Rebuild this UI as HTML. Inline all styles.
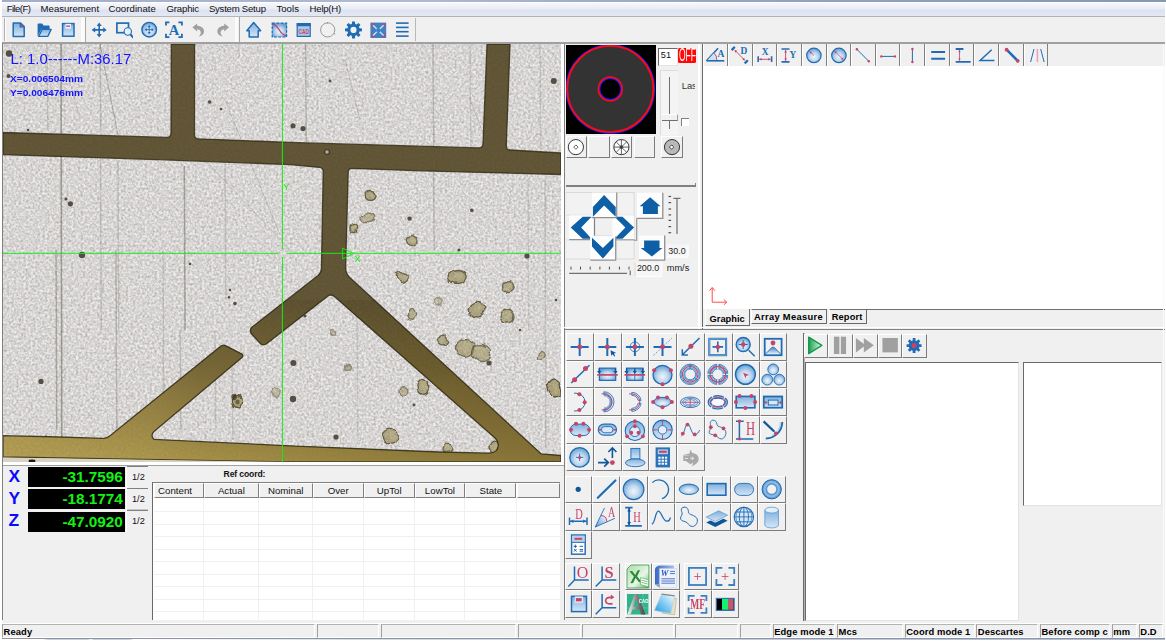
<!DOCTYPE html><html><head><meta charset="utf-8"><title>Measurement</title><style>
*{box-sizing:border-box;margin:0;padding:0}
html,body{width:1166px;height:641px;overflow:hidden;background:#f0f0f0;font-family:"Liberation Sans",sans-serif;}
body{position:relative}
.a{position:absolute}
.t{position:absolute;white-space:nowrap;line-height:1}
.menu{position:absolute;left:2px;top:3px;width:1164px;height:13px;background:linear-gradient(#f6f7fc,#e9ecf6 45%,#dde2f0 55%,#e4e8f4);}
.menu .t{font-size:9.6px;color:#111;top:1.1px}
.btn{position:absolute;background:#f0f0f0;border-right:1px solid #7c7c7c;border-bottom:1px solid #7c7c7c;border-left:1px solid #fff;border-top:1px solid #fff}
.btn svg{position:absolute;left:0;top:0}
.sb{position:absolute;top:624px;height:14px;border-top:1px solid #b4b4b4;border-left:1px solid #a0a0a0;border-right:1px solid #fff;border-bottom:1px solid #fff}
.sbt{position:absolute;top:627.3px;font-size:9.4px;font-weight:bold;color:#000;white-space:nowrap;line-height:1;letter-spacing:0.1px}
.sunk{position:absolute;background:#fff;border-top:1.5px solid #696969;border-left:1.5px solid #696969;border-right:1px solid #e3e3e3;border-bottom:1px solid #e3e3e3}
.th{position:absolute;top:483px;height:15px;background:#f0f0f0;border-right:1.5px solid #808080;border-bottom:1.5px solid #808080;border-top:1px solid #fff;border-left:1px solid #fff;font-size:9.7px;color:#111;text-align:center;line-height:14px}
</style></head><body>
<div class="a" style="left:1.5px;top:0;width:1165px;height:1.6px;background:linear-gradient(90deg,#a2aec8,#b0bad2 35%,#98a6be 60%,#8698b0)"></div>
<div class="a" style="left:0;top:1.6px;width:1166px;height:1.6px;background:#fff"></div>
<div class="a" style="left:0;top:0;width:1.5px;height:641px;background:#fff"></div>
<div class="menu">
<span class="t" style="left:4.7px;letter-spacing:-0.57px">File(F)</span>
<span class="t" style="left:38.6px;letter-spacing:-0.02px">Measurement</span>
<span class="t" style="left:106.5px;letter-spacing:0.05px">Coordinate</span>
<span class="t" style="left:164.4px;letter-spacing:-0.14px">Graphic</span>
<span class="t" style="left:206.9px;letter-spacing:-0.24px">System Setup</span>
<span class="t" style="left:274.4px;letter-spacing:0.04px">Tools</span>
<span class="t" style="left:307.6px;letter-spacing:-0.24px">Help(H)</span>
</div>
<div class="a" style="left:2px;top:15.6px;width:1164px;height:1.2px;background:#b4b4b4"></div>
<div class="a" style="left:2px;top:17px;width:1164px;height:25.5px;background:#f0f0f0"></div>
<div class="a" style="left:4px;top:18px;width:1px;height:23px;background:#b0b0b0"></div>
<div class="a" style="left:5px;top:18px;width:1px;height:23px;background:#fff"></div>
<div class="a" style="left:81px;top:17px;width:3.6px;height:24.5px;background:#fbfbfb"></div>
<div class="a" style="left:84.6px;top:17px;width:1px;height:24.5px;background:#a8a8a8"></div>
<div class="a" style="left:235.4px;top:17px;width:3px;height:24.5px;background:#fbfbfb"></div>
<div class="a" style="left:238.6px;top:17px;width:1px;height:24.5px;background:#a8a8a8"></div>
<div class="a" style="left:415px;top:18px;width:1px;height:23px;background:#b8b8b8"></div>
<svg class="a" style="left:11px;top:20.5px" width="18" height="18" viewBox="0 0 18 18"><path d="M2.2 2 H9.6 L13.2 5.6 V15.6 H2.2 Z" fill="url(#g1)" stroke="#1f6cb4" stroke-width="1.5" stroke-linejoin="round"/><path d="M9.3 2.2 V5.8 H13" fill="none" stroke="#1f6cb4" stroke-width="1.3"/><path d="M9.9 2.6 L12.6 5.3 H9.9Z" fill="#c4446a"/></svg>
<svg class="a" style="left:35.5px;top:20.5px" width="18" height="18" viewBox="0 0 18 18"><path d="M1.6 15.2 V3.2 Q1.6 2.4 2.4 2.4 H6.2 L7.6 4.4 H12.8 Q13.6 4.4 13.6 5.2 V8 H5.5 Z" fill="#1f6cb4"/><path d="M6.2 8.4 H15.2 L11.8 15.4 H2.6 Z" fill="url(#g1)" stroke="#1f6cb4" stroke-width="1.3" stroke-linejoin="round"/></svg>
<svg class="a" style="left:61px;top:20.5px" width="18" height="18" viewBox="0 0 18 18"><rect x="1.6" y="2.6" width="11.4" height="12.6" fill="url(#g1)" stroke="#1f6cb4" stroke-width="1.5"/><rect x="4.4" y="2.8" width="5.6" height="4.8" fill="#eef4fb"/><rect x="5.2" y="4.5" width="4" height="1.3" fill="#c4446a"/></svg>
<svg class="a" style="left:91px;top:20.5px" width="18" height="18" viewBox="0 0 18 18"><path d="M2.5999999999999996 8.9H13.799999999999999M8.2 3.3000000000000007V14.5" stroke="#1f6cb4" stroke-width="1.6" fill="none"/><path d="M15.72 8.90L12.20 11.46L12.20 6.34Z" fill="#1f6cb4"/><path d="M0.68 8.90L4.20 6.34L4.20 11.46Z" fill="#1f6cb4"/><path d="M8.20 16.42L5.64 12.90L10.76 12.90Z" fill="#1f6cb4"/><path d="M8.20 1.38L10.76 4.90L5.64 4.90Z" fill="#1f6cb4"/></svg>
<svg class="a" style="left:115px;top:20.5px" width="18" height="18" viewBox="0 0 18 18"><rect x="1.9" y="2.1" width="11.6" height="9.6" fill="none" stroke="#1f6cb4" stroke-width="1.7"/><path d="M15 12.8 L18 16.4" stroke="#1f6cb4" stroke-width="2" stroke-linecap="round"/><circle cx="12.8" cy="10.5" r="3.7" fill="#e8f1fa" stroke="#1f6cb4" stroke-width="1.1"/></svg>
<svg class="a" style="left:140.5px;top:20.5px" width="18" height="18" viewBox="0 0 18 18"><circle cx="8.2" cy="8.7" r="7.3" fill="url(#g2)" stroke="#1f6cb4" stroke-width="1.4"/><path d="M4.799999999999999 8.7H11.6M8.2 5.299999999999999V12.1" stroke="#1f6cb4" stroke-width="0.9" fill="none"/><path d="M12.80 8.70L10.60 10.30L10.60 7.10Z" fill="#1f6cb4"/><path d="M3.60 8.70L5.80 7.10L5.80 10.30Z" fill="#1f6cb4"/><path d="M8.20 13.30L6.60 11.10L9.80 11.10Z" fill="#1f6cb4"/><path d="M8.20 4.10L9.80 6.30L6.60 6.30Z" fill="#1f6cb4"/></svg>
<svg class="a" style="left:164.5px;top:20.5px" width="18" height="18" viewBox="0 0 18 18"><path d="M1 4.6V1.4H4.4M13.4 1.4H16.9V4.6M16.9 12.8V16.2H13.4M4.4 16.2H1V12.8" fill="none" stroke="#1f6cb4" stroke-width="1.8"/><text x="9" y="13.6" text-anchor="middle" font-family="Liberation Serif, serif" font-weight="bold" font-size="14.5" fill="#1f6cb4">A</text></svg>
<svg class="a" style="left:190px;top:20.5px" width="18" height="18" viewBox="0 0 18 18"><path d="M2.4 6.2 L7.2 2.6 V4.8 C11.5 5 14.4 7.5 14 11 C13.7 13.4 11.5 15 8.6 15.6 C10.6 13.8 11.2 12 10.6 10.4 C10 9 8.8 8.3 7.2 8.2 V10.4 Z" fill="#a0a0a0"/></svg>
<svg class="a" style="left:215px;top:20.5px" width="18" height="18" viewBox="0 0 18 18"><g transform="translate(16.4 0) scale(-1 1)"><path d="M2.4 6.2 L7.2 2.6 V4.8 C11.5 5 14.4 7.5 14 11 C13.7 13.4 11.5 15 8.6 15.6 C10.6 13.8 11.2 12 10.6 10.4 C10 9 8.8 8.3 7.2 8.2 V10.4 Z" fill="#a0a0a0"/></g></svg>
<svg class="a" style="left:245px;top:20.5px" width="18" height="18" viewBox="0 0 18 18"><path d="M8.7 1.6 L15.6 9.8 H13.2 V16 H4.2 V9.8 H1.8 Z" fill="url(#g1)" stroke="#1f6cb4" stroke-width="1.5" stroke-linejoin="round"/></svg>
<svg class="a" style="left:270.5px;top:20.5px" width="18" height="18" viewBox="0 0 18 18"><rect x="1.2" y="2.2" width="14.4" height="13.8" fill="url(#g2)" stroke="#1f6cb4" stroke-width="1.2" stroke-dasharray="3 1.2"/><path d="M2 3.4 C8 4 8.5 14 15 14.6" fill="none" stroke="#c4446a" stroke-width="1.2"/></svg>
<svg class="a" style="left:296px;top:20.5px" width="18" height="18" viewBox="0 0 18 18"><rect x="1.2" y="2.6" width="13" height="12.8" fill="#a9c9e8" stroke="#1f6cb4" stroke-width="1.2"/><rect x="0.8" y="2.2" width="13.8" height="3" fill="#1f6cb4"/><text x="7.7" y="13" text-anchor="middle" font-family="Liberation Sans, sans-serif" font-weight="bold" font-size="6.4" fill="#c4446a" textLength="10.4" lengthAdjust="spacingAndGlyphs">CAD</text></svg>
<svg class="a" style="left:320px;top:20.5px" width="18" height="18" viewBox="0 0 18 18"><circle cx="7.7" cy="8.9" r="7.1" fill="none" stroke="#9a9a9a" stroke-width="1"/><path d="M7.4 1.2v1.6M14 12.4l1.2 .9" stroke="#9a9a9a" stroke-width="1"/></svg>
<svg class="a" style="left:344.5px;top:20.5px" width="18" height="18" viewBox="0 0 18 18"><path d="M16.98 7.49 L16.98 10.31 L14.47 10.58 L13.91 11.93 L15.50 13.90 L13.50 15.90 L11.53 14.31 L10.18 14.87 L9.91 17.38 L7.09 17.38 L6.82 14.87 L5.47 14.31 L3.50 15.90 L1.50 13.90 L3.09 11.93 L2.53 10.58 L0.02 10.31 L0.02 7.49 L2.53 7.22 L3.09 5.87 L1.50 3.90 L3.50 1.90 L5.47 3.49 L6.82 2.93 L7.09 0.42 L9.91 0.42 L10.18 2.93 L11.53 3.49 L13.50 1.90 L15.50 3.90 L13.91 5.87 L14.47 7.22Z" fill="#1f6cb4"/><circle cx="8.5" cy="8.9" r="3.1" fill="#f0f0f0"/></svg>
<svg class="a" style="left:369.5px;top:20.5px" width="18" height="18" viewBox="0 0 18 18"><rect x="0.4" y="1.6" width="15.8" height="15.4" fill="#3f82c4"/><path d="M2 6V3.2H5M11.6 3.2H14.6V6M14.6 12.6V15.4H11.6M5 15.4H2V12.6" fill="none" stroke="#c4446a" stroke-width="1.3"/><path d="M3 4.2L13.6 14.4M13.6 4.2L3 14.4" stroke="#cfe2f4" stroke-width="1.4"/><circle cx="8.3" cy="9.3" r="2.2" fill="#3f82c4"/></svg>
<svg class="a" style="left:395px;top:20.5px" width="18" height="18" viewBox="0 0 18 18"><rect x="1" y="1.30" width="12.6" height="1.6" fill="#1f6cb4"/><rect x="1" y="5.60" width="12.6" height="1.6" fill="#1f6cb4"/><rect x="1" y="9.90" width="12.6" height="1.6" fill="#1f6cb4"/><rect x="1" y="14.30" width="12.6" height="1.6" fill="#1f6cb4"/></svg>
<div class="a" style="left:2px;top:42px;width:1164px;height:1.5px;background:#a0a0a0"></div>
<div class="a" style="left:2px;top:43px;width:1.2px;height:578px;background:#808080"></div>
<div class="a" style="left:561px;top:43.5px;width:3px;height:421px;background:#fff"></div>
<div class="a" style="left:3px;top:462px;width:561px;height:3px;background:#fff"></div>
<div class="a" style="left:3px;top:464.5px;width:561px;height:1.3px;background:#a0a0a0"></div>
<svg class="a" style="left:3px;top:44px" width="558" height="418" viewBox="3 44 558 418">
<defs>
<filter id="nz" color-interpolation-filters="sRGB" x="0" y="0" width="100%" height="100%"><feTurbulence type="fractalNoise" baseFrequency="0.42" numOctaves="2" seed="7" result="n"/><feColorMatrix in="n" type="matrix" values="0 0 0 0 0.45  0 0 0 0 0.43  0 0 0 0 0.42  1.5 1.2 0 0 -1.0"/></filter>
<filter id="nz2" color-interpolation-filters="sRGB" x="0" y="0" width="100%" height="100%"><feTurbulence type="fractalNoise" baseFrequency="0.38" numOctaves="2" seed="23" result="n"/><feColorMatrix in="n" type="matrix" values="0 0 0 0 1  0 0 0 0 1  0 0 0 0 1  0 1.4 1.4 0 -1.0"/></filter>
<filter id="bl" x="-1" y="-1" width="3" height="3"><feGaussianBlur stdDeviation="0.7"/></filter>
<filter id="bl3" x="-20" y="-0.1" width="41" height="1.2"><feGaussianBlur stdDeviation="0.45"/></filter><filter id="warp" x="3" y="44" width="558" height="418" filterUnits="userSpaceOnUse" primitiveUnits="userSpaceOnUse" color-interpolation-filters="sRGB"><feTurbulence type="fractalNoise" baseFrequency="0.09" numOctaves="2" seed="4" result="t"/><feDisplacementMap in="SourceGraphic" in2="t" scale="7" xChannelSelector="R" yChannelSelector="G" result="d"/><feGaussianBlur in="d" stdDeviation="0.55"/></filter><filter id="bl2"><feGaussianBlur stdDeviation="1.6"/></filter>
<linearGradient id="cg" gradientUnits="userSpaceOnUse" x1="0" y1="300" x2="0" y2="462"><stop offset="0" stop-color="#5f5331"/><stop offset="0.4" stop-color="#786833"/><stop offset="0.8" stop-color="#9c8740"/><stop offset="1" stop-color="#ae9847"/></linearGradient>
<linearGradient id="dk" gradientUnits="userSpaceOnUse" x1="150" y1="0" x2="561" y2="0"><stop offset="0" stop-color="#3c2c08" stop-opacity="0"/><stop offset="1" stop-color="#3c2c08" stop-opacity="0.35"/></linearGradient>
<linearGradient id="lt" gradientUnits="userSpaceOnUse" x1="3" y1="0" x2="200" y2="0"><stop offset="0" stop-color="#c8b060" stop-opacity="0.45"/><stop offset="1" stop-color="#c8b060" stop-opacity="0"/></linearGradient>
<clipPath id="chc2"><path d="M3 300H300V462H3Z"/></clipPath><clipPath id="chc"><path d="M3 300H561V462H3Z"/></clipPath>
</defs>
<rect x="3" y="44" width="558" height="418" fill="#e8e6e5"/>
<rect x="3" y="44" width="558" height="418" fill="#8a867c" filter="url(#nz)" opacity="0.26"/>
<rect x="3" y="44" width="558" height="418" filter="url(#nz2)" opacity="0.3"/>
<line x1="61" y1="44" x2="61.8" y2="440" stroke="#3a3a28" stroke-width="1.6" opacity="0.4" filter="url(#bl3)"/>
<line x1="184.3" y1="166" x2="185.10000000000002" y2="330" stroke="#3a3a28" stroke-width="1.5" opacity="0.36000000000000004" filter="url(#bl3)"/>
<line x1="100" y1="44" x2="100.8" y2="132" stroke="#3a3a28" stroke-width="1.5" opacity="0.2" filter="url(#bl3)"/>
<line x1="100.5" y1="160" x2="101.3" y2="330" stroke="#3a3a28" stroke-width="1.5" opacity="0.17600000000000002" filter="url(#bl3)"/>
<line x1="118" y1="160" x2="118.8" y2="330" stroke="#3a3a28" stroke-width="1.5" opacity="0.16000000000000003" filter="url(#bl3)"/>
<line x1="225" y1="160" x2="225.8" y2="300" stroke="#3a3a28" stroke-width="1.5" opacity="0.16000000000000003" filter="url(#bl3)"/>
<line x1="56" y1="250" x2="56.8" y2="430" stroke="#3a3a28" stroke-width="1.5" opacity="0.32000000000000006" filter="url(#bl3)"/>
<line x1="116" y1="250" x2="116.8" y2="430" stroke="#3a3a28" stroke-width="1.5" opacity="0.24" filter="url(#bl3)"/>
<line x1="163" y1="250" x2="163.8" y2="420" stroke="#3a3a28" stroke-width="1.5" opacity="0.16000000000000003" filter="url(#bl3)"/>
<line x1="180" y1="330" x2="180.8" y2="430" stroke="#3a3a28" stroke-width="1.5" opacity="0.2" filter="url(#bl3)"/>
<line x1="305.5" y1="44" x2="306.3" y2="142" stroke="#3a3a28" stroke-width="1.5" opacity="0.24" filter="url(#bl3)"/>
<line x1="433" y1="44" x2="433.8" y2="150" stroke="#3a3a28" stroke-width="1.5" opacity="0.24" filter="url(#bl3)"/>
<line x1="433.5" y1="172" x2="434.3" y2="250" stroke="#3a3a28" stroke-width="1.5" opacity="0.2" filter="url(#bl3)"/>
<line x1="470" y1="44" x2="470.8" y2="148" stroke="#3a3a28" stroke-width="1.5" opacity="0.144" filter="url(#bl3)"/>
<line x1="540" y1="44" x2="540.8" y2="150" stroke="#3a3a28" stroke-width="1.5" opacity="0.144" filter="url(#bl3)"/>
<line x1="47" y1="44" x2="47.8" y2="130" stroke="#3a3a28" stroke-width="1.5" opacity="0.16000000000000003" filter="url(#bl3)"/>
<line x1="215" y1="330" x2="215.8" y2="430" stroke="#3a3a28" stroke-width="1.5" opacity="0.144" filter="url(#bl3)"/>
<line x1="232" y1="360" x2="232.8" y2="440" stroke="#3a3a28" stroke-width="1.5" opacity="0.144" filter="url(#bl3)"/>
<line x1="357" y1="290" x2="357.8" y2="440" stroke="#3a3a28" stroke-width="1.5" opacity="0.12" filter="url(#bl3)"/>
<line x1="545" y1="180" x2="545.8" y2="450" stroke="#3a3a28" stroke-width="1.5" opacity="0.16000000000000003" filter="url(#bl3)"/>
<line x1="528" y1="180" x2="528.8" y2="330" stroke="#3a3a28" stroke-width="1.5" opacity="0.12" filter="url(#bl3)"/>
<line x1="100" y1="44" x2="118" y2="135" stroke="#3a3a28" stroke-width="1" opacity="0.3"/>
<line x1="225" y1="100" x2="280" y2="235" stroke="#3a3a28" stroke-width="1" opacity="0.18"/>
<line x1="205" y1="160" x2="290" y2="250" stroke="#3a3a28" stroke-width="1" opacity="0.15"/>
<line x1="345" y1="60" x2="360" y2="120" stroke="#3a3a28" stroke-width="1" opacity="0.2"/>
<line x1="470" y1="100" x2="486" y2="140" stroke="#3a3a28" stroke-width="1" opacity="0.2"/>
<line x1="60" y1="44" x2="80" y2="120" stroke="#3a3a28" stroke-width="1" opacity="0.12"/>
<g filter="url(#warp)">
<ellipse cx="457.2" cy="276.5" rx="9" ry="7" fill="#968a50" fill-opacity="0.63" stroke="#463c1c" stroke-opacity="0.77" stroke-width="1.3"/>
<ellipse cx="458.6" cy="275.8" rx="4.5" ry="3.5" fill="#c4bc90" opacity="0.39"/>
<ellipse cx="508.5" cy="286.5" rx="6" ry="6" fill="#968a50" fill-opacity="0.57" stroke="#463c1c" stroke-opacity="0.70" stroke-width="1.3"/>
<ellipse cx="509.4" cy="285.9" rx="3.0" ry="3.0" fill="#c4bc90" opacity="0.35"/>
<ellipse cx="476.1" cy="309.1" rx="8" ry="8" fill="#968a50" fill-opacity="0.63" stroke="#463c1c" stroke-opacity="0.77" stroke-width="1.3"/>
<ellipse cx="477.3" cy="308.3" rx="4.0" ry="4.0" fill="#c4bc90" opacity="0.39"/>
<ellipse cx="507.0" cy="316.0" rx="7" ry="7" fill="#968a50" fill-opacity="0.57" stroke="#463c1c" stroke-opacity="0.70" stroke-width="1.3"/>
<ellipse cx="508.1" cy="315.3" rx="3.5" ry="3.5" fill="#c4bc90" opacity="0.35"/>
<ellipse cx="402.3" cy="276.5" rx="5" ry="5" fill="#968a50" fill-opacity="0.57" stroke="#463c1c" stroke-opacity="0.70" stroke-width="1.3"/>
<ellipse cx="403.1" cy="276.0" rx="2.5" ry="2.5" fill="#c4bc90" opacity="0.35"/>
<ellipse cx="412.5" cy="314.3" rx="4" ry="6" fill="#968a50" fill-opacity="0.52" stroke="#463c1c" stroke-opacity="0.63" stroke-width="1.3"/>
<ellipse cx="413.1" cy="313.7" rx="2.0" ry="3.0" fill="#c4bc90" opacity="0.32"/>
<ellipse cx="443.5" cy="340.0" rx="5" ry="5" fill="#968a50" fill-opacity="0.57" stroke="#463c1c" stroke-opacity="0.70" stroke-width="1.3"/>
<ellipse cx="444.2" cy="339.5" rx="2.5" ry="2.5" fill="#c4bc90" opacity="0.35"/>
<ellipse cx="465.5" cy="348.5" rx="9" ry="9" fill="#968a50" fill-opacity="0.57" stroke="#463c1c" stroke-opacity="0.70" stroke-width="1.3"/>
<ellipse cx="466.9" cy="347.6" rx="4.5" ry="4.5" fill="#c4bc90" opacity="0.35"/>
<ellipse cx="481.5" cy="352.5" rx="9" ry="8" fill="#968a50" fill-opacity="0.52" stroke="#463c1c" stroke-opacity="0.63" stroke-width="1.3"/>
<ellipse cx="482.9" cy="351.7" rx="4.5" ry="4.0" fill="#c4bc90" opacity="0.32"/>
<ellipse cx="541.3" cy="355.5" rx="4" ry="4" fill="#968a50" fill-opacity="0.46" stroke="#463c1c" stroke-opacity="0.56" stroke-width="1.3"/>
<ellipse cx="541.9" cy="355.1" rx="2.0" ry="2.0" fill="#c4bc90" opacity="0.28"/>
<ellipse cx="555.0" cy="388.0" rx="7" ry="8" fill="#968a50" fill-opacity="0.69" stroke="#463c1c" stroke-opacity="0.84" stroke-width="1.3"/>
<ellipse cx="556.0" cy="387.2" rx="3.5" ry="4.0" fill="#c4bc90" opacity="0.42"/>
<ellipse cx="422.9" cy="386.3" rx="5" ry="7" fill="#968a50" fill-opacity="0.63" stroke="#463c1c" stroke-opacity="0.77" stroke-width="1.3"/>
<ellipse cx="423.6" cy="385.6" rx="2.5" ry="3.5" fill="#c4bc90" opacity="0.39"/>
<ellipse cx="404.0" cy="391.5" rx="4" ry="5" fill="#968a50" fill-opacity="0.46" stroke="#463c1c" stroke-opacity="0.56" stroke-width="1.3"/>
<ellipse cx="404.6" cy="391.0" rx="2.0" ry="2.5" fill="#c4bc90" opacity="0.28"/>
<ellipse cx="390.3" cy="436.1" rx="7" ry="8" fill="#968a50" fill-opacity="0.63" stroke="#463c1c" stroke-opacity="0.77" stroke-width="1.3"/>
<ellipse cx="391.4" cy="435.3" rx="3.5" ry="4.0" fill="#c4bc90" opacity="0.39"/>
<ellipse cx="446.9" cy="448.1" rx="4" ry="4" fill="#968a50" fill-opacity="0.57" stroke="#463c1c" stroke-opacity="0.70" stroke-width="1.3"/>
<ellipse cx="447.5" cy="447.7" rx="2.0" ry="2.0" fill="#c4bc90" opacity="0.35"/>
<ellipse cx="495.0" cy="448.1" rx="5" ry="7" fill="#968a50" fill-opacity="0.63" stroke="#463c1c" stroke-opacity="0.77" stroke-width="1.3"/>
<ellipse cx="495.8" cy="447.4" rx="2.5" ry="3.5" fill="#c4bc90" opacity="0.39"/>
<ellipse cx="370.1" cy="195.5" rx="5" ry="5" fill="#968a50" fill-opacity="0.63" stroke="#463c1c" stroke-opacity="0.77" stroke-width="1.3"/>
<ellipse cx="370.9" cy="195.0" rx="2.5" ry="2.5" fill="#c4bc90" opacity="0.39"/>
<ellipse cx="367.9" cy="217.8" rx="6" ry="5" fill="#968a50" fill-opacity="0.46" stroke="#463c1c" stroke-opacity="0.56" stroke-width="1.3"/>
<ellipse cx="368.8" cy="217.3" rx="3.0" ry="2.5" fill="#c4bc90" opacity="0.28"/>
<ellipse cx="353.8" cy="228.5" rx="4" ry="4" fill="#968a50" fill-opacity="0.63" stroke="#463c1c" stroke-opacity="0.77" stroke-width="1.3"/>
<ellipse cx="354.4" cy="228.1" rx="2.0" ry="2.0" fill="#c4bc90" opacity="0.39"/>
<ellipse cx="412.1" cy="240.5" rx="6" ry="5" fill="#968a50" fill-opacity="0.57" stroke="#463c1c" stroke-opacity="0.70" stroke-width="1.3"/>
<ellipse cx="413.0" cy="240.0" rx="3.0" ry="2.5" fill="#c4bc90" opacity="0.35"/>
<ellipse cx="276.0" cy="393.2" rx="5" ry="5" fill="#968a50" fill-opacity="0.34" stroke="#463c1c" stroke-opacity="0.42" stroke-width="1.3"/>
<ellipse cx="276.8" cy="392.7" rx="2.5" ry="2.5" fill="#c4bc90" opacity="0.21"/>
<ellipse cx="237.5" cy="401.5" rx="5" ry="6" fill="#968a50" fill-opacity="0.69" stroke="#463c1c" stroke-opacity="0.84" stroke-width="1.3"/>
<ellipse cx="238.2" cy="400.9" rx="2.5" ry="3.0" fill="#c4bc90" opacity="0.42"/>
<ellipse cx="347.5" cy="367.5" rx="3" ry="3" fill="#968a50" fill-opacity="0.40" stroke="#463c1c" stroke-opacity="0.49" stroke-width="1.3"/>
<ellipse cx="347.9" cy="367.2" rx="1.5" ry="1.5" fill="#c4bc90" opacity="0.24"/>
<ellipse cx="332.5" cy="332.5" rx="3" ry="3" fill="#968a50" fill-opacity="0.34" stroke="#463c1c" stroke-opacity="0.42" stroke-width="1.3"/>
<ellipse cx="332.9" cy="332.2" rx="1.5" ry="1.5" fill="#c4bc90" opacity="0.21"/>
<ellipse cx="438.5" cy="302.5" rx="4" ry="4" fill="#968a50" fill-opacity="0.34" stroke="#463c1c" stroke-opacity="0.42" stroke-width="1.3"/>
<ellipse cx="439.1" cy="302.1" rx="2.0" ry="2.0" fill="#c4bc90" opacity="0.21"/>
</g>
<ellipse cx="234" cy="397" rx="2.6" ry="3.2" fill="#3a3018" opacity="0.75"/><ellipse cx="237.5" cy="402" rx="2.2" ry="2.4" fill="#3a3018" opacity="0.6"/>
<circle cx="553.8" cy="81" r="3" fill="#2c2818" opacity="0.8"/>
<circle cx="293" cy="125.8" r="2.6" fill="#2c2818" opacity="0.8"/>
<circle cx="303" cy="128.5" r="2.6" fill="#2c2818" opacity="0.8"/>
<circle cx="70.4" cy="203.8" r="2.6" fill="#2c2818" opacity="0.8"/>
<circle cx="66" cy="199" r="1.6" fill="#2c2818" opacity="0.8"/>
<circle cx="209.7" cy="102" r="1.8" fill="#2c2818" opacity="0.8"/>
<circle cx="221" cy="109" r="1.3" fill="#2c2818" opacity="0.8"/>
<circle cx="82" cy="255" r="3.2" fill="#2c2818" opacity="0.8"/>
<circle cx="41" cy="381.4" r="2.6" fill="#2c2818" opacity="0.8"/>
<circle cx="9" cy="53.5" r="3.2" fill="#2c2818" opacity="0.8"/>
<circle cx="8.5" cy="76" r="2" fill="#2c2818" opacity="0.8"/>
<circle cx="293.4" cy="363" r="3" fill="#2c2818" opacity="0.8"/>
<circle cx="293" cy="399" r="3.2" fill="#2c2818" opacity="0.8"/>
<circle cx="336" cy="437" r="2.6" fill="#2c2818" opacity="0.8"/>
<circle cx="489" cy="363" r="2.6" fill="#2c2818" opacity="0.8"/>
<circle cx="471.8" cy="210.4" r="1.8" fill="#2c2818" opacity="0.8"/>
<circle cx="409.6" cy="218.6" r="2.2" fill="#2c2818" opacity="0.8"/>
<circle cx="235" cy="303.6" r="1.8" fill="#2c2818" opacity="0.8"/>
<circle cx="229" cy="297.3" r="1.3" fill="#2c2818" opacity="0.8"/>
<circle cx="28" cy="130" r="1.3" fill="#2c2818" opacity="0.8"/>
<circle cx="46" cy="437" r="1.6" fill="#2c2818" opacity="0.8"/>
<circle cx="140" cy="462" r="2.5" fill="#2c2818" opacity="0.8"/>
<circle cx="527" cy="256" r="2.6" fill="#2c2818" opacity="0.8"/>
<circle cx="459" cy="250" r="1.6" fill="#2c2818" opacity="0.8"/>
<circle cx="330" cy="81" r="1.4" fill="#2c2818" opacity="0.8"/>
<circle cx="190" cy="264" r="1.3" fill="#2c2818" opacity="0.8"/>
<circle cx="230" cy="290" r="1.2" fill="#2c2818" opacity="0.8"/>
<circle cx="305" cy="316" r="1.6" fill="#2c2818" opacity="0.8"/>
<circle cx="414" cy="405" r="1.4" fill="#2c2818" opacity="0.8"/>
<circle cx="520" cy="330" r="1.3" fill="#2c2818" opacity="0.8"/>
<circle cx="556" cy="300" r="1.3" fill="#2c2818" opacity="0.8"/>
<circle cx="372" cy="318" r="1.3" fill="#2c2818" opacity="0.8"/>
<path d="M3 132.5 L100 135.4 L167.5 137.4 Q170.8 137 171 133 L171.3 44 L194.6 44 L194.5 135 Q194.8 138.6 198 138.8 L290 142.4 L479 147.9 Q482.6 147.6 483 144 L487 44 L510 44 L506.3 146 Q506.3 149.8 510 150 L561 153 L561 174.5 L421 170.8 L352 168.4 Q348.3 168.6 348.2 172 L345.6 268 Q345.8 273.5 349.5 277.3 L541 453.8 L561 455.5 L561 462 L290 462 L3 457 L3 435.7 L60 437 L104 438.4 Q107.5 438.2 110 435.8 L221 346 Q223.5 344.3 225.5 345.6 L241.5 353.8 Q243.8 355.5 242 357.5 L154 431.5 Q150 435.5 154 439.4 L290 445.8 L439 452 L489 453.2 Q498.5 452.5 498.2 445 Q498.2 441 495 438 L335 297 Q331.5 293.5 328 296 L266.5 343.8 Q264 345.6 261 344.2 L252 334.5 Q249 331 251.5 327.5 L318 275.5 Q321.3 272.6 321.4 269 L323.2 172 Q323.2 167.6 319.5 167.4 L290 164.6 L164 159.8 L3 154.7 Z" fill="#5f5331"/>
<path d="M3 132.5 L100 135.4 L167.5 137.4 Q170.8 137 171 133 L171.3 44 L194.6 44 L194.5 135 Q194.8 138.6 198 138.8 L290 142.4 L479 147.9 Q482.6 147.6 483 144 L487 44 L510 44 L506.3 146 Q506.3 149.8 510 150 L561 153 L561 174.5 L421 170.8 L352 168.4 Q348.3 168.6 348.2 172 L345.6 268 Q345.8 273.5 349.5 277.3 L541 453.8 L561 455.5 L561 462 L290 462 L3 457 L3 435.7 L60 437 L104 438.4 Q107.5 438.2 110 435.8 L221 346 Q223.5 344.3 225.5 345.6 L241.5 353.8 Q243.8 355.5 242 357.5 L154 431.5 Q150 435.5 154 439.4 L290 445.8 L439 452 L489 453.2 Q498.5 452.5 498.2 445 Q498.2 441 495 438 L335 297 Q331.5 293.5 328 296 L266.5 343.8 Q264 345.6 261 344.2 L252 334.5 Q249 331 251.5 327.5 L318 275.5 Q321.3 272.6 321.4 269 L323.2 172 Q323.2 167.6 319.5 167.4 L290 164.6 L164 159.8 L3 154.7 Z" fill="url(#cg)" clip-path="url(#chc)"/>
<path d="M3 132.5 L100 135.4 L167.5 137.4 Q170.8 137 171 133 L171.3 44 L194.6 44 L194.5 135 Q194.8 138.6 198 138.8 L290 142.4 L479 147.9 Q482.6 147.6 483 144 L487 44 L510 44 L506.3 146 Q506.3 149.8 510 150 L561 153 L561 174.5 L421 170.8 L352 168.4 Q348.3 168.6 348.2 172 L345.6 268 Q345.8 273.5 349.5 277.3 L541 453.8 L561 455.5 L561 462 L290 462 L3 457 L3 435.7 L60 437 L104 438.4 Q107.5 438.2 110 435.8 L221 346 Q223.5 344.3 225.5 345.6 L241.5 353.8 Q243.8 355.5 242 357.5 L154 431.5 Q150 435.5 154 439.4 L290 445.8 L439 452 L489 453.2 Q498.5 452.5 498.2 445 Q498.2 441 495 438 L335 297 Q331.5 293.5 328 296 L266.5 343.8 Q264 345.6 261 344.2 L252 334.5 Q249 331 251.5 327.5 L318 275.5 Q321.3 272.6 321.4 269 L323.2 172 Q323.2 167.6 319.5 167.4 L290 164.6 L164 159.8 L3 154.7 Z" fill="url(#dk)" clip-path="url(#chc)"/>
<path d="M3 132.5 L100 135.4 L167.5 137.4 Q170.8 137 171 133 L171.3 44 L194.6 44 L194.5 135 Q194.8 138.6 198 138.8 L290 142.4 L479 147.9 Q482.6 147.6 483 144 L487 44 L510 44 L506.3 146 Q506.3 149.8 510 150 L561 153 L561 174.5 L421 170.8 L352 168.4 Q348.3 168.6 348.2 172 L345.6 268 Q345.8 273.5 349.5 277.3 L541 453.8 L561 455.5 L561 462 L290 462 L3 457 L3 435.7 L60 437 L104 438.4 Q107.5 438.2 110 435.8 L221 346 Q223.5 344.3 225.5 345.6 L241.5 353.8 Q243.8 355.5 242 357.5 L154 431.5 Q150 435.5 154 439.4 L290 445.8 L439 452 L489 453.2 Q498.5 452.5 498.2 445 Q498.2 441 495 438 L335 297 Q331.5 293.5 328 296 L266.5 343.8 Q264 345.6 261 344.2 L252 334.5 Q249 331 251.5 327.5 L318 275.5 Q321.3 272.6 321.4 269 L323.2 172 Q323.2 167.6 319.5 167.4 L290 164.6 L164 159.8 L3 154.7 Z" fill="url(#lt)" clip-path="url(#chc2)"/>
<path d="M3 132.5 L100 135.4 L167.5 137.4 Q170.8 137 171 133 L171.3 44 L194.6 44 L194.5 135 Q194.8 138.6 198 138.8 L290 142.4 L479 147.9 Q482.6 147.6 483 144 L487 44 L510 44 L506.3 146 Q506.3 149.8 510 150 L561 153 L561 174.5 L421 170.8 L352 168.4 Q348.3 168.6 348.2 172 L345.6 268 Q345.8 273.5 349.5 277.3 L541 453.8 L561 455.5 L561 462 L290 462 L3 457 L3 435.7 L60 437 L104 438.4 Q107.5 438.2 110 435.8 L221 346 Q223.5 344.3 225.5 345.6 L241.5 353.8 Q243.8 355.5 242 357.5 L154 431.5 Q150 435.5 154 439.4 L290 445.8 L439 452 L489 453.2 Q498.5 452.5 498.2 445 Q498.2 441 495 438 L335 297 Q331.5 293.5 328 296 L266.5 343.8 Q264 345.6 261 344.2 L252 334.5 Q249 331 251.5 327.5 L318 275.5 Q321.3 272.6 321.4 269 L323.2 172 Q323.2 167.6 319.5 167.4 L290 164.6 L164 159.8 L3 154.7 Z" fill="#4a4024" filter="url(#nz)" opacity="0.25"/>
<path d="M3 132.5 L100 135.4 L167.5 137.4 Q170.8 137 171 133 L171.3 44 L194.6 44 L194.5 135 Q194.8 138.6 198 138.8 L290 142.4 L479 147.9 Q482.6 147.6 483 144 L487 44 L510 44 L506.3 146 Q506.3 149.8 510 150 L561 153 L561 174.5 L421 170.8 L352 168.4 Q348.3 168.6 348.2 172 L345.6 268 Q345.8 273.5 349.5 277.3 L541 453.8 L561 455.5 L561 462 L290 462 L3 457 L3 435.7 L60 437 L104 438.4 Q107.5 438.2 110 435.8 L221 346 Q223.5 344.3 225.5 345.6 L241.5 353.8 Q243.8 355.5 242 357.5 L154 431.5 Q150 435.5 154 439.4 L290 445.8 L439 452 L489 453.2 Q498.5 452.5 498.2 445 Q498.2 441 495 438 L335 297 Q331.5 293.5 328 296 L266.5 343.8 Q264 345.6 261 344.2 L252 334.5 Q249 331 251.5 327.5 L318 275.5 Q321.3 272.6 321.4 269 L323.2 172 Q323.2 167.6 319.5 167.4 L290 164.6 L164 159.8 L3 154.7 Z" fill="none" stroke="#2e2812" stroke-width="1.3" opacity="0.8" stroke-linejoin="round"/>
<circle cx="327" cy="152" r="2.4" fill="#b0a890" stroke="#2c2818" stroke-width="1"/>
<path d="M3 457.6 L290 462 L3 462Z" fill="#d8d4c4"/>
<ellipse cx="32" cy="461" rx="3.5" ry="1.4" fill="#1c180c"/>
<line x1="3" y1="253.3" x2="278.8" y2="253.3" stroke="#14ee14" stroke-width="1"/>
<line x1="286.3" y1="253.3" x2="561" y2="253.3" stroke="#14ee14" stroke-width="1"/>
<line x1="282.4" y1="44" x2="282.4" y2="249.5" stroke="#14ee14" stroke-width="1"/>
<line x1="282.4" y1="257" x2="282.4" y2="462" stroke="#14ee14" stroke-width="1"/>
<path d="M342.6 248.2 L353.8 253.4 L342.6 259 Z" fill="none" stroke="#14ee14" stroke-width="0.9"/>
<text x="354.6" y="262" font-family="Liberation Sans, sans-serif" font-size="9" fill="#14ee14">X</text>
<text x="283.4" y="189.6" font-family="Liberation Sans, sans-serif" font-size="8.6" fill="#14ee14">Y</text>
</svg>
<span class="t" style="left:10.5px;top:51.5px;font-size:14.9px;color:#1414ff">L: 1.0------M:36.17</span>
<span class="t" id="xmm" style="left:9.8px;top:74.8px;font-size:9px;font-weight:bold;color:#1414ff;transform:scaleX(1.127);transform-origin:0 0">X=0.006504mm</span>
<span class="t" id="ymm" style="left:9.8px;top:88.8px;font-size:9px;font-weight:bold;color:#1414ff;transform:scaleX(1.127);transform-origin:0 0">Y=0.006476mm</span>
<div class="a" style="left:564px;top:43.5px;width:1.3px;height:578px;background:#808080"></div>
<div class="a" style="left:27.5px;top:467px;width:97.5px;height:20px;background:#000"></div>
<span class="t" style="left:8.6px;top:467.6px;font-size:17.4px;font-weight:bold;color:#0a0aff">X</span>
<span class="t" style="right:1043.2px;top:469.1px;font-size:15.3px;font-weight:bold;color:#14f014">-31.7596</span>
<span class="t" style="left:132px;top:472.6px;font-size:9.2px;color:#111">1/2</span>
<div class="a" style="left:27.5px;top:489px;width:97.5px;height:20px;background:#000"></div>
<span class="t" style="left:8.6px;top:489.6px;font-size:17.4px;font-weight:bold;color:#0a0aff">Y</span>
<span class="t" style="right:1043.2px;top:491.1px;font-size:15.3px;font-weight:bold;color:#14f014">-18.1774</span>
<span class="t" style="left:132px;top:494.6px;font-size:9.2px;color:#111">1/2</span>
<div class="a" style="left:27.5px;top:511.5px;width:97.5px;height:20px;background:#000"></div>
<span class="t" style="left:8.6px;top:512.1px;font-size:17.4px;font-weight:bold;color:#0a0aff">Z</span>
<span class="t" style="right:1043.2px;top:513.6px;font-size:15.3px;font-weight:bold;color:#14f014">-47.0920</span>
<span class="t" style="left:132px;top:517.1px;font-size:9.2px;color:#111">1/2</span>
<div class="a" style="left:126.5px;top:466px;width:21.5px;height:1px;background:#808080"></div>
<div class="a" style="left:126.5px;top:487.6px;width:21.5px;height:1.3px;background:#808080"></div>
<div class="a" style="left:126.5px;top:510.2px;width:21.5px;height:1.3px;background:#808080"></div>
<div class="a" style="left:126.5px;top:509px;width:21.5px;height:1px;background:#c8c8c8"></div>
<div class="a" style="left:125.5px;top:467px;width:1px;height:65px;background:#fff"></div>
<span class="t" style="left:223.6px;top:470.1px;font-size:8.6px;font-weight:bold;letter-spacing:-0.13px;color:#111">Ref coord:</span>
<div class="a" style="left:152px;top:482px;width:408px;height:138px;background:#fff;border-top:1.3px solid #808080;border-left:1.6px solid #696969"></div>
<div class="th" style="left:153.5px;width:50.5px;text-align:left;padding-left:3.6px">Content</div>
<div class="th" style="left:204px;width:54.69999999999999px">Actual</div>
<div class="th" style="left:258.7px;width:54.0px">Nominal</div>
<div class="th" style="left:312.7px;width:51.10000000000002px">Over</div>
<div class="th" style="left:363.8px;width:50.80000000000001px">UpTol</div>
<div class="th" style="left:414.6px;width:50.69999999999999px">LowTol</div>
<div class="th" style="left:465.3px;width:51.19999999999999px">State</div>
<div class="th" style="left:516.5px;width:43.5px"></div>
<div class="a" style="left:203px;top:498px;width:1px;height:122px;background:#f0f0f0"></div>
<div class="a" style="left:257.7px;top:498px;width:1px;height:122px;background:#f0f0f0"></div>
<div class="a" style="left:311.7px;top:498px;width:1px;height:122px;background:#f0f0f0"></div>
<div class="a" style="left:362.8px;top:498px;width:1px;height:122px;background:#f0f0f0"></div>
<div class="a" style="left:413.6px;top:498px;width:1px;height:122px;background:#f0f0f0"></div>
<div class="a" style="left:464.3px;top:498px;width:1px;height:122px;background:#f0f0f0"></div>
<div class="a" style="left:515.5px;top:498px;width:1px;height:122px;background:#f0f0f0"></div>
<div class="a" style="left:154px;top:511.0px;width:406px;height:1px;background:#f0f0f0"></div>
<div class="a" style="left:154px;top:523.5px;width:406px;height:1px;background:#f0f0f0"></div>
<div class="a" style="left:154px;top:536.0px;width:406px;height:1px;background:#f0f0f0"></div>
<div class="a" style="left:154px;top:548.5px;width:406px;height:1px;background:#f0f0f0"></div>
<div class="a" style="left:154px;top:561.0px;width:406px;height:1px;background:#f0f0f0"></div>
<div class="a" style="left:154px;top:573.5px;width:406px;height:1px;background:#f0f0f0"></div>
<div class="a" style="left:154px;top:586.0px;width:406px;height:1px;background:#f0f0f0"></div>
<div class="a" style="left:154px;top:598.5px;width:406px;height:1px;background:#f0f0f0"></div>
<div class="a" style="left:154px;top:611.0px;width:406px;height:1px;background:#f0f0f0"></div>
<div class="a" style="left:2px;top:620px;width:1164px;height:21px;background:#f0f0f0"></div>
<div class="a" style="left:2px;top:622.6px;width:1164px;height:1px;background:#fff"></div>
<div class="a" style="left:2px;top:638.2px;width:1164px;height:2.8px;background:#fff"></div>
<div class="a" style="left:2px;top:637.7px;width:1162.5px;height:1px;background:#8e949e"></div>
<div class="a" style="left:2px;top:638.8px;width:1162.5px;height:1px;background:linear-gradient(90deg,#fff,#fff 3.5%,#c4d2e8 4%,#c4d2e8 7.4%,#fff 7.6%,#c4d2e8 7.9%,#c4d2e8 11%,#fff 11.3%,#d4deee 30%,#c4d2e8 55%,#a8bcd8 100%)"></div>
<div class="sb" style="left:2px;width:313.0px"></div>
<div class="sb" style="left:316.5px;width:62.5px"></div>
<div class="sb" style="left:380.5px;width:135.5px"></div>
<div class="sb" style="left:517.5px;width:63.0px"></div>
<div class="sb" style="left:582px;width:91.5px"></div>
<div class="sb" style="left:675px;width:63.0px"></div>
<div class="sb" style="left:739.5px;width:31.5px"></div>
<div class="sb" style="left:772.5px;width:62.5px"></div>
<div class="sb" style="left:836.5px;width:66.5px"></div>
<div class="sb" style="left:904.5px;width:70.0px"></div>
<div class="sb" style="left:976px;width:62.0px"></div>
<div class="sb" style="left:1039.5px;width:70.5px"></div>
<div class="sb" style="left:1111.5px;width:25.5px"></div>
<div class="sb" style="left:1138.5px;width:24.0px"></div>
<span class="sbt" style="left:3.6px">Ready</span>
<span class="sbt" style="left:774.2px">Edge mode 1</span>
<span class="sbt" style="left:838.5px">Mcs</span>
<span class="sbt" style="left:906.2px">Coord mode 1</span>
<span class="sbt" style="left:977.8px">Descartes</span>
<span class="sbt" style="left:1041.5px">Before comp c</span>
<span class="sbt" style="left:1113.3px">mm</span>
<span class="sbt" style="left:1140.3px">D.D</span>
<svg width="0" height="0" style="position:absolute"><defs>
<linearGradient id="g1" x1="0" y1="0" x2="0" y2="1"><stop offset="0" stop-color="#7fb0de"/><stop offset="1" stop-color="#d6e6f5"/></linearGradient>
<radialGradient id="g2" cx="0.5" cy="0.6" r="0.6"><stop offset="0" stop-color="#eef5fb"/><stop offset="0.45" stop-color="#c2d9ef"/><stop offset="1" stop-color="#5f9bd2"/></radialGradient>
<linearGradient id="g3" x1="0" y1="0" x2="1" y2="0"><stop offset="0" stop-color="#18a050"/><stop offset="1" stop-color="#e8f8ee"/></linearGradient>
</defs></svg>
<div class="a" style="left:566px;top:45px;width:90px;height:89px;background:#000"></div>
<svg class="a" style="left:566px;top:45px" width="90" height="89" viewBox="0 0 90 89"><circle cx="44.3" cy="44" r="43.6" fill="#333" stroke="#1c1cff" stroke-width="2.4"/><circle cx="44.3" cy="44" r="43.1" fill="none" stroke="#ff0a0a" stroke-width="1.9"/><circle cx="44.3" cy="44" r="11.2" fill="#000" stroke="#1c1cff" stroke-width="2.4"/><circle cx="44.3" cy="44" r="11.9" fill="none" stroke="#ff0a0a" stroke-width="1.7"/></svg>
<div class="sunk" style="left:658px;top:48px;width:19.5px;height:17.5px"></div>
<span class="t" style="left:660.8px;top:51.2px;font-size:9.2px;color:#111">51</span>
<div class="a" style="left:678px;top:48px;width:18px;height:15px;background:#ff0808;border-radius:1.5px"></div>
<span class="t" id="off" style="left:678.9px;top:47.1px;font-size:17.9px;color:#fff;transform:scaleX(0.475);transform-origin:0 0">OFF</span>
<div class="a" style="left:660px;top:70px;width:17.5px;height:65px;background:#f4f4f4;border-left:1px solid #dcdcdc;border-top:1px solid #dcdcdc"></div>
<div class="a" style="left:669px;top:76.5px;width:1.2px;height:52px;background:#707070"></div>
<div class="a" style="left:662px;top:113.5px;width:15.5px;height:7px;background:#f0f0f0;border-bottom:1.5px solid #707070;border-right:1px solid #a0a0a0;border-top:1px solid #fff"></div>
<span class="t" style="left:681.7px;top:81.1px;font-size:9.4px;color:#333;width:13.8px;overflow:hidden">Las</span>
<div class="a" style="left:680.8px;top:117.6px;width:8.4px;height:8.4px;background:#fff;border-top:1.2px solid #808080;border-left:1.2px solid #808080"></div>
<div class="btn" style="left:566px;top:136px;width:21px;height:22px"></div>
<div class="btn" style="left:588px;top:136px;width:22px;height:22px"></div>
<div class="btn" style="left:611px;top:136px;width:21px;height:22px"></div>
<div class="btn" style="left:634px;top:136px;width:21px;height:22px"></div>
<div class="btn" style="left:661px;top:136px;width:22px;height:22px"></div>
<div class="a" style="left:566px;top:185.4px;width:130px;height:1.3px;background:#808080"></div>
<div class="a" style="left:695px;top:183.4px;width:1.2px;height:3px;background:#808080"></div>
<svg class="a" style="left:565.5px;top:190px" width="132" height="90" viewBox="565.5 190 132 90"><rect x="565.2" y="192.4" width="68.4" height="66.6" fill="#f2f2f2" stroke="#d4d4d4" stroke-width="0.8"/><path d="M591.2 192.4V259M616.2 192.4V259M565.2 215.2H633.6M565.2 240H633.6" stroke="#dcdcdc" stroke-width="0.8" fill="none"/><rect x="568.7" y="215.4" width="24.6" height="24" fill="#fdfdfd"/><path d="M568.7 239.6H593.4" stroke="#909090" stroke-width="1.2"/><rect x="612" y="215.4" width="21.4" height="24" fill="#fdfdfd"/><path d="M612 239.8H633.6" stroke="#909090" stroke-width="1"/><rect x="594" y="219" width="16.6" height="16" fill="#f0f0f0"/><path d="M594 218V236" stroke="#808080" stroke-width="1.2"/><path d="M594 235.4H611" stroke="#e0e0e0" stroke-width="0.8"/><path d="M570.2 227.6L582.2 216.7H591L580.7 227.6L591 238.7H582.2Z" fill="#0f5fa6"/><path d="M633.6 227.6L622 216.7H614L624.9 227.6L614 238.7H622Z" fill="#0f5fa6"/><rect x="591" y="192.6" width="25.4" height="25" fill="#fdfdfd"/><path d="M616.2 192.6V217.7H591" stroke="#909090" stroke-width="1.2" fill="none"/><path d="M603.6 195L615.2 207V216.7L603.6 205.5L592.4 216.7V207Z" fill="#0f5fa6"/><rect x="589.7" y="236.4" width="25.4" height="23.6" fill="#fdfdfd"/><path d="M615.2 236.4V260.2H589.7" stroke="#909090" stroke-width="1.2" fill="none"/><path d="M591.5 237.7L602.4 248.1L612.9 237.7V246.6L602.4 258.6L591.5 246.6Z" fill="#0f5fa6"/><rect x="636.6" y="192.8" width="25.6" height="25.2" fill="#fdfdfd"/><path d="M662.3 192.8V218.3H636.4" stroke="#909090" stroke-width="1.3" fill="none"/><path d="M649.6 197.2L660.1 206.2H657.4V214.1H642.4V206.2H639.1Z" fill="#0f5fa6"/><path d="M636.2 218.3V240.2H633.4" stroke="#909090" stroke-width="1.1" fill="none"/><rect x="638.4" y="235.6" width="25.6" height="24.4" fill="#fdfdfd"/><path d="M664.2 235.6V260.2H638.4" stroke="#909090" stroke-width="1.3" fill="none"/><path d="M643.6 240.6H659V248.1H662L651.4 256.4L640.2 248.1H643.6Z" fill="#0f5fa6"/><rect x="668" y="195.9" width="2.6" height="1.2" fill="#505050"/><rect x="668" y="202.0" width="2.6" height="1.2" fill="#505050"/><rect x="668" y="208.4" width="2.6" height="1.2" fill="#505050"/><rect x="668" y="214.3" width="2.6" height="1.2" fill="#505050"/><rect x="668" y="219.8" width="2.6" height="1.2" fill="#505050"/><rect x="668" y="226.0" width="2.6" height="1.2" fill="#505050"/><rect x="668" y="232.1" width="2.6" height="1.2" fill="#505050"/><path d="M676.5 198.4V234M672.8 198.4H680" stroke="#707070" stroke-width="1.2" fill="none"/><rect x="666" y="244.4" width="21.6" height="12.8" fill="#f6f6f6"/><path d="M666 257.2H687.6V244.4" stroke="#fff" stroke-width="1" fill="none"/><rect x="634.6" y="262.4" width="26.6" height="14.2" fill="#f6f6f6"/><path d="M634.6 276.6H661.2V262.4" stroke="#fff" stroke-width="1" fill="none"/><path d="M634.6 262.4V276.6" stroke="#d0d0d0" stroke-width="0.8"/><rect x="570.0" y="266.6" width="1" height="3" fill="#505050"/><rect x="579.5" y="266.6" width="1" height="3" fill="#505050"/><rect x="589.2" y="266.6" width="1" height="3" fill="#505050"/><rect x="598.9" y="266.6" width="1" height="3" fill="#505050"/><rect x="608.4" y="266.6" width="1" height="3" fill="#505050"/><rect x="618.4" y="266.6" width="1" height="3" fill="#505050"/><rect x="628.0" y="266.6" width="1" height="3" fill="#505050"/><path d="M568.7 273.3H626.6M629.7 270.4V275.2" stroke="#707070" stroke-width="1.2" fill="none"/></svg>
<span class="t" style="left:668.3px;top:246.9px;font-size:8.9px;color:#222">30.0</span>
<span class="t" style="left:636.9px;top:263.9px;font-size:8.95px;color:#222">200.0</span>
<span class="t" style="left:666.8px;top:264.2px;font-size:9.2px;color:#222">mm/s</span>
<div class="a" style="left:698.4px;top:43.5px;width:1.2px;height:286px;background:#fff"></div>
<div class="a" style="left:701.8px;top:43.5px;width:1.6px;height:286px;background:#696969"></div>
<div class="a" style="left:703.4px;top:66px;width:462.6px;height:243px;background:#fff"></div>
<svg class="a" style="left:705px;top:284px" width="28" height="24" viewBox="0 0 28 24"><path d="M7.2 18.2V4M4.6 6.6L7.2 3.4L9.8 6.6M7.2 18.2H21.4M18.8 15.6L21.8 18.2L18.8 20.8" fill="none" stroke="#ff4a4a" stroke-width="1"/></svg>
<div class="a" style="left:703.4px;top:43.5px;width:24.63px;height:22.5px;border-right:1.5px solid #808080;border-left:1px solid #fff"></div>
<svg class="a" style="left:704.4px;top:44px" width="22" height="22" viewBox="0 0 22 22"><path d="M2.5 16.8 L14.1 4.2" stroke="#1f6cb4" stroke-width="1.6" fill="none"/><path d="M2.5 16.8H20.3" stroke="#1f6cb4" stroke-width="1.6"/><path d="M3.6 16 L10.4 8.6 Q13.4 11.6 13.2 16Z" fill="#cfe0f2"/><path d="M10 9 Q13.2 12 12.8 16" fill="none" stroke="#c4446a" stroke-width="0.9"/><text x="17" y="12.7" text-anchor="middle" font-family="Liberation Serif, serif" font-weight="bold" font-size="9.6" fill="#1f6cb4">A</text></svg>
<div class="a" style="left:728.03px;top:43.5px;width:24.63px;height:22.5px;border-right:1.5px solid #808080;border-left:1px solid #fff"></div>
<svg class="a" style="left:729.03px;top:44px" width="22" height="22" viewBox="0 0 22 22"><path d="M2.6 6.1L5.8 2.9M15.7 19.4L18.9 16.2" stroke="#1f6cb4" stroke-width="2.2"/><line x1="5.6" y1="6" x2="15.9" y2="16.4" stroke="#c4446a" stroke-width="0.9"/><path d="M15.90 16.40L13.27 15.62L15.15 13.77Z" fill="#c4446a"/><path d="M5.60 6.00L6.35 8.63L8.23 6.78Z" fill="#c4446a"/><text x="14.8" y="10.4" text-anchor="middle" font-family="Liberation Serif, serif" font-weight="bold" font-size="9.4" fill="#1f6cb4">D</text></svg>
<div class="a" style="left:752.66px;top:43.5px;width:24.63px;height:22.5px;border-right:1.5px solid #808080;border-left:1px solid #fff"></div>
<svg class="a" style="left:753.66px;top:44px" width="22" height="22" viewBox="0 0 22 22"><path d="M4.2 12.2V18M17.6 12.2V18" stroke="#1f6cb4" stroke-width="1.6"/><line x1="5.2" y1="15.3" x2="16.6" y2="15.3" stroke="#c4446a" stroke-width="0.9"/><path d="M16.60 15.30L14.20 16.62L14.20 13.98Z" fill="#c4446a"/><path d="M5.20 15.30L7.60 16.62L7.60 13.98Z" fill="#c4446a"/><text x="11.1" y="11.4" text-anchor="middle" font-family="Liberation Serif, serif" font-weight="bold" font-size="9.4" fill="#1f6cb4">X</text></svg>
<div class="a" style="left:777.29px;top:43.5px;width:24.63px;height:22.5px;border-right:1.5px solid #808080;border-left:1px solid #fff"></div>
<svg class="a" style="left:778.29px;top:44px" width="22" height="22" viewBox="0 0 22 22"><path d="M3.5 5H11.5M3.5 17.8H11.5" stroke="#1f6cb4" stroke-width="1.7"/><line x1="7.6" y1="6" x2="7.6" y2="16.8" stroke="#c4446a" stroke-width="0.9"/><path d="M7.60 16.80L6.28 14.40L8.92 14.40Z" fill="#c4446a"/><path d="M7.60 6.00L6.28 8.40L8.92 8.40Z" fill="#c4446a"/><text x="14.8" y="14.2" text-anchor="middle" font-family="Liberation Serif, serif" font-weight="bold" font-size="9.4" fill="#1f6cb4">Y</text></svg>
<div class="a" style="left:801.92px;top:43.5px;width:24.63px;height:22.5px;border-right:1.5px solid #808080;border-left:1px solid #fff"></div>
<svg class="a" style="left:802.92px;top:44px" width="22" height="22" viewBox="0 0 22 22"><circle cx="10.9" cy="11.4" r="7.2" fill="url(#g2)" stroke="#1f6cb4" stroke-width="1.2"/><line x1="10.9" y1="11.4" x2="6.6" y2="7.4" stroke="#c4446a" stroke-width="0.8"/><path d="M6.60 7.40L9.03 8.01L7.39 9.78Z" fill="#c4446a"/></svg>
<div class="a" style="left:826.55px;top:43.5px;width:24.63px;height:22.5px;border-right:1.5px solid #808080;border-left:1px solid #fff"></div>
<svg class="a" style="left:827.55px;top:44px" width="22" height="22" viewBox="0 0 22 22"><circle cx="10.9" cy="11.4" r="7.2" fill="url(#g2)" stroke="#1f6cb4" stroke-width="1.2"/><line x1="6.4" y1="7" x2="15.4" y2="15.8" stroke="#c4446a" stroke-width="0.8"/><path d="M15.40 15.80L12.98 15.13L14.67 13.40Z" fill="#c4446a"/><path d="M6.40 7.00L7.13 9.40L8.82 7.67Z" fill="#c4446a"/></svg>
<div class="a" style="left:851.18px;top:43.5px;width:24.63px;height:22.5px;border-right:1.5px solid #808080;border-left:1px solid #fff"></div>
<svg class="a" style="left:852.18px;top:44px" width="22" height="22" viewBox="0 0 22 22"><line x1="4.9" y1="5.3" x2="16.8" y2="17.3" stroke="#1f6cb4" stroke-width="1"/><circle cx="4.9" cy="5.3" r="1.2" fill="#c4446a"/><circle cx="16.8" cy="17.3" r="1.2" fill="#c4446a"/></svg>
<div class="a" style="left:875.81px;top:43.5px;width:24.63px;height:22.5px;border-right:1.5px solid #808080;border-left:1px solid #fff"></div>
<svg class="a" style="left:876.81px;top:44px" width="22" height="22" viewBox="0 0 22 22"><line x1="4.3" y1="12.4" x2="17.9" y2="12.4" stroke="#1f6cb4" stroke-width="1"/><circle cx="4.3" cy="12.4" r="1.2" fill="#c4446a"/><circle cx="17.9" cy="12.4" r="1.2" fill="#c4446a"/></svg>
<div class="a" style="left:900.4399999999999px;top:43.5px;width:24.63px;height:22.5px;border-right:1.5px solid #808080;border-left:1px solid #fff"></div>
<svg class="a" style="left:901.4399999999999px;top:44px" width="22" height="22" viewBox="0 0 22 22"><line x1="11.4" y1="5" x2="11.4" y2="18" stroke="#1f6cb4" stroke-width="1"/><circle cx="11.4" cy="5" r="1.2" fill="#c4446a"/><circle cx="11.4" cy="18" r="1.2" fill="#c4446a"/></svg>
<div class="a" style="left:925.0699999999999px;top:43.5px;width:24.63px;height:22.5px;border-right:1.5px solid #808080;border-left:1px solid #fff"></div>
<svg class="a" style="left:926.0699999999999px;top:44px" width="22" height="22" viewBox="0 0 22 22"><path d="M5.2 8H19.1M5.2 14.7H19.1" stroke="#1f6cb4" stroke-width="1.9"/></svg>
<div class="a" style="left:949.6999999999999px;top:43.5px;width:24.63px;height:22.5px;border-right:1.5px solid #808080;border-left:1px solid #fff"></div>
<svg class="a" style="left:950.6999999999999px;top:44px" width="22" height="22" viewBox="0 0 22 22"><path d="M4.7 5H12.4M4.7 17.8H19.6" stroke="#1f6cb4" stroke-width="1.8"/><line x1="8.5" y1="6" x2="8.5" y2="16.8" stroke="#c4446a" stroke-width="0.8"/><path d="M8.50 16.80L7.29 14.60L9.71 14.60Z" fill="#c4446a"/><path d="M8.50 6.00L7.29 8.20L9.71 8.20Z" fill="#c4446a"/></svg>
<div class="a" style="left:974.3299999999999px;top:43.5px;width:24.63px;height:22.5px;border-right:1.5px solid #808080;border-left:1px solid #fff"></div>
<svg class="a" style="left:975.3299999999999px;top:44px" width="22" height="22" viewBox="0 0 22 22"><path d="M16.7 5.7L5.1 16.5H19.4" fill="none" stroke="#1f6cb4" stroke-width="1.5" stroke-linejoin="miter"/></svg>
<div class="a" style="left:998.96px;top:43.5px;width:24.63px;height:22.5px;border-right:1.5px solid #808080;border-left:1px solid #fff"></div>
<svg class="a" style="left:999.96px;top:44px" width="22" height="22" viewBox="0 0 22 22"><line x1="6.6" y1="5.7" x2="17.7" y2="16.8" stroke="#1f6cb4" stroke-width="2.5"/><circle cx="6.6" cy="5.7" r="1.9" fill="#c4446a"/><circle cx="17.7" cy="16.8" r="1.9" fill="#c4446a"/></svg>
<div class="a" style="left:1023.5899999999999px;top:43.5px;width:24.63px;height:22.5px;border-right:1.5px solid #808080;border-left:1px solid #fff"></div>
<svg class="a" style="left:1024.59px;top:44px" width="22" height="22" viewBox="0 0 22 22"><path d="M9 5L5.6 18M15.7 5L19.1 18" stroke="#1f6cb4" stroke-width="1"/><path d="M12.4 5V18" stroke="#e9a3b4" stroke-width="1.6"/></svg>
<div class="a" style="left:703.4px;top:309px;width:462.6px;height:20px;background:#f0f0f0"></div>
<div class="a" style="left:704.5px;top:309px;width:45.5px;height:16.8px;background:#f0f0f0;border-left:1px solid #fff;border-right:1.5px solid #696969;border-bottom:1.5px solid #696969"></div>
<div class="a" style="left:750.5px;top:309px;width:76px;height:15px;background:#f0f0f0;border-left:1px solid #fff;border-right:1.5px solid #696969;border-bottom:1.5px solid #696969;border-top:1px solid #6e6e6e"></div>
<div class="a" style="left:828.5px;top:309px;width:38.3px;height:15px;background:#f0f0f0;border-left:1px solid #fff;border-right:1.5px solid #696969;border-bottom:1.5px solid #696969;border-top:1px solid #6e6e6e"></div>
<div class="a" style="left:867px;top:309px;width:299px;height:1px;background:#6e6e6e"></div>
<span class="t" style="left:709.6px;top:314.8px;font-size:9.3px;font-weight:bold;color:#000">Graphic</span>
<span class="t" style="left:754px;top:312.7px;font-size:9.3px;font-weight:bold;letter-spacing:0.33px;color:#000">Array Measure</span>
<span class="t" style="left:831.7px;top:312.7px;font-size:9.3px;font-weight:bold;letter-spacing:0.15px;color:#000">Report</span>
<div class="a" style="left:564px;top:327px;width:602px;height:1px;background:#fff"></div>
<div class="a" style="left:564px;top:328.8px;width:602px;height:1.3px;background:#808080"></div>
<div class="btn" style="left:566px;top:333px;width:28px;height:28px"></div>
<div class="btn" style="left:594px;top:333px;width:28px;height:28px"></div>
<div class="btn" style="left:622px;top:333px;width:27px;height:28px"></div>
<div class="btn" style="left:649px;top:333px;width:28px;height:28px"></div>
<div class="btn" style="left:677px;top:333px;width:28px;height:28px"></div>
<div class="btn" style="left:705px;top:333px;width:28px;height:28px"></div>
<div class="btn" style="left:733px;top:333px;width:27px;height:28px"></div>
<div class="btn" style="left:760px;top:333px;width:27px;height:28px"></div>
<div class="btn" style="left:566px;top:361px;width:28px;height:27px"></div>
<div class="btn" style="left:594px;top:361px;width:28px;height:27px"></div>
<div class="btn" style="left:622px;top:361px;width:27px;height:27px"></div>
<div class="btn" style="left:649px;top:361px;width:28px;height:27px"></div>
<div class="btn" style="left:677px;top:361px;width:28px;height:27px"></div>
<div class="btn" style="left:705px;top:361px;width:28px;height:27px"></div>
<div class="btn" style="left:733px;top:361px;width:27px;height:27px"></div>
<div class="btn" style="left:760px;top:361px;width:27px;height:27px"></div>
<div class="btn" style="left:566px;top:388px;width:28px;height:28px"></div>
<div class="btn" style="left:594px;top:388px;width:28px;height:28px"></div>
<div class="btn" style="left:622px;top:388px;width:27px;height:28px"></div>
<div class="btn" style="left:649px;top:388px;width:28px;height:28px"></div>
<div class="btn" style="left:677px;top:388px;width:28px;height:28px"></div>
<div class="btn" style="left:705px;top:388px;width:28px;height:28px"></div>
<div class="btn" style="left:733px;top:388px;width:27px;height:28px"></div>
<div class="btn" style="left:760px;top:388px;width:27px;height:28px"></div>
<div class="btn" style="left:566px;top:416px;width:28px;height:28px"></div>
<div class="btn" style="left:594px;top:416px;width:28px;height:28px"></div>
<div class="btn" style="left:622px;top:416px;width:27px;height:28px"></div>
<div class="btn" style="left:649px;top:416px;width:28px;height:28px"></div>
<div class="btn" style="left:677px;top:416px;width:28px;height:28px"></div>
<div class="btn" style="left:705px;top:416px;width:28px;height:28px"></div>
<div class="btn" style="left:733px;top:416px;width:27px;height:28px"></div>
<div class="btn" style="left:760px;top:416px;width:27px;height:28px"></div>
<div class="btn" style="left:566px;top:444px;width:28px;height:27px"></div>
<div class="btn" style="left:594px;top:444px;width:28px;height:27px"></div>
<div class="btn" style="left:622px;top:444px;width:27px;height:27px"></div>
<div class="btn" style="left:649px;top:444px;width:28px;height:27px"></div>
<div class="btn" style="left:677px;top:444px;width:28px;height:27px"></div>
<div class="btn" style="left:565px;top:476px;width:27px;height:27px"></div>
<div class="btn" style="left:592px;top:476px;width:28px;height:27px"></div>
<div class="btn" style="left:620px;top:476px;width:28px;height:27px"></div>
<div class="btn" style="left:648px;top:476px;width:27px;height:27px"></div>
<div class="btn" style="left:675px;top:476px;width:28px;height:27px"></div>
<div class="btn" style="left:703px;top:476px;width:28px;height:27px"></div>
<div class="btn" style="left:731px;top:476px;width:27px;height:27px"></div>
<div class="btn" style="left:758px;top:476px;width:28px;height:27px"></div>
<div class="btn" style="left:565px;top:503px;width:27px;height:28px"></div>
<div class="btn" style="left:592px;top:503px;width:28px;height:28px"></div>
<div class="btn" style="left:620px;top:503px;width:28px;height:28px"></div>
<div class="btn" style="left:648px;top:503px;width:27px;height:28px"></div>
<div class="btn" style="left:675px;top:503px;width:28px;height:28px"></div>
<div class="btn" style="left:703px;top:503px;width:28px;height:28px"></div>
<div class="btn" style="left:731px;top:503px;width:27px;height:28px"></div>
<div class="btn" style="left:758px;top:503px;width:28px;height:28px"></div>
<div class="btn" style="left:565px;top:531px;width:27px;height:28px"></div>
<div class="btn" style="left:565px;top:563px;width:27px;height:27px"></div>
<div class="btn" style="left:592px;top:563px;width:28px;height:27px"></div>
<div class="btn" style="left:625px;top:563px;width:27px;height:27px"></div>
<div class="btn" style="left:652px;top:563px;width:28px;height:27px"></div>
<div class="btn" style="left:684px;top:563px;width:28px;height:27px"></div>
<div class="btn" style="left:712px;top:563px;width:27px;height:27px"></div>
<div class="btn" style="left:565px;top:590px;width:27px;height:28px"></div>
<div class="btn" style="left:592px;top:590px;width:28px;height:28px"></div>
<div class="btn" style="left:625px;top:590px;width:27px;height:28px"></div>
<div class="btn" style="left:652px;top:590px;width:28px;height:28px"></div>
<div class="btn" style="left:684px;top:590px;width:28px;height:28px"></div>
<div class="btn" style="left:712px;top:590px;width:27px;height:28px"></div>
<div class="a" style="left:803px;top:333px;width:1px;height:288px;background:#696969"></div><div class="a" style="left:804px;top:333px;width:1px;height:288px;background:#b4b4b4"></div>
<div class="btn" style="left:804px;top:334px;width:24px;height:24px"></div>
<div class="btn" style="left:828px;top:334px;width:25px;height:24px"></div>
<div class="btn" style="left:853px;top:334px;width:25px;height:24px"></div>
<div class="btn" style="left:878px;top:334px;width:24px;height:24px"></div>
<div class="btn" style="left:902px;top:334px;width:25px;height:24px"></div>
<div class="sunk" style="left:805px;top:361.5px;width:213.5px;height:259.5px"></div>
<div class="sunk" style="left:1022.5px;top:361.5px;width:139px;height:144px"></div>
<svg class="a" style="left:0;top:0" width="1166" height="641" viewBox="0 0 1166 641"><g transform="translate(565.50 136.50)"><circle cx="10.4" cy="10.6" r="7.6" fill="#fff" stroke="#222" stroke-width="0.9"/><path d="M10.4 8.4L12.6 10.6L10.4 12.8L8.2 10.6Z" fill="#fff" stroke="#222" stroke-width="0.7"/></g><g transform="translate(611.00 136.50)"><circle cx="10.4" cy="10.6" r="7.6" fill="#fff" stroke="#222" stroke-width="0.9"/><circle cx="10.4" cy="10.6" r="1.4" fill="none" stroke="#222" stroke-width="0.7"/><line x1="10.4" y1="10.6" x2="17.80" y2="10.60" stroke="#222" stroke-width="0.7"/><line x1="10.4" y1="10.6" x2="15.63" y2="15.83" stroke="#222" stroke-width="0.7"/><line x1="10.4" y1="10.6" x2="10.41" y2="18.00" stroke="#222" stroke-width="0.7"/><line x1="10.4" y1="10.6" x2="5.17" y2="15.84" stroke="#222" stroke-width="0.7"/><line x1="10.4" y1="10.6" x2="3.00" y2="10.61" stroke="#222" stroke-width="0.7"/><line x1="10.4" y1="10.6" x2="5.16" y2="5.38" stroke="#222" stroke-width="0.7"/><line x1="10.4" y1="10.6" x2="10.38" y2="3.20" stroke="#222" stroke-width="0.7"/><line x1="10.4" y1="10.6" x2="15.62" y2="5.35" stroke="#222" stroke-width="0.7"/></g><g transform="translate(661.00 136.50)"><circle cx="11" cy="10.6" r="7.6" fill="#b8b8b8" stroke="#222" stroke-width="0.9"/><path d="M11 8.4L12.6 10.6L11 12.8L8.2 10.6Z" fill="#fff" stroke="#222" stroke-width="0.7"/></g><g transform="translate(566.10 333.60)"><path d="M4.6 13.3H22.6M13.6 4.300000000000001V22.3" stroke="#1f6cb4" stroke-width="2" fill="none"/><circle cx="13.6" cy="13.3" r="2.4" fill="#c4446a"/></g><g transform="translate(593.80 333.60)"><path d="M4.5 13.3H22.5M13.5 4.300000000000001V22.3" stroke="#1f6cb4" stroke-width="2" fill="none"/><circle cx="13.5" cy="13.3" r="2.4" fill="#c4446a"/><path d="M16.8 16.6L22.4 19.4L20 20L21.4 22.4L20.4 22.9L19 20.6L17.4 22.2Z" fill="#0f559a"/></g><g transform="translate(621.50 333.60)"><path d="M4.4 13.3H22.4M13.4 4.300000000000001V22.3" stroke="#1f6cb4" stroke-width="2" fill="none"/><circle cx="13.4" cy="13.3" r="4.9" fill="none" stroke="#1f6cb4" stroke-width="0.8"/><circle cx="13.4" cy="13.3" r="2.4" fill="#c4446a"/></g><g transform="translate(649.20 333.60)"><path d="M4.2 21.9L22.6 4.6" stroke="#6fa4d6" stroke-width="1" stroke-dasharray="2 1.4"/><path d="M4.300000000000001 13.3H22.3M13.3 4.300000000000001V22.3" stroke="#1f6cb4" stroke-width="2" fill="none"/><circle cx="13.3" cy="13.3" r="2.4" fill="#c4446a"/></g><g transform="translate(676.90 333.60)"><path d="M22.6 4.4L5.5 21.1M5.4 15.6V21.3H11" stroke="#1f6cb4" stroke-width="1.5" fill="none"/><circle cx="14" cy="12.6" r="2.5" fill="#c4446a"/></g><g transform="translate(704.60 333.60)"><rect x="4.7" y="5.2" width="16.8" height="16.4" fill="none" stroke="#1f6cb4" stroke-width="2"/><rect x="4.7" y="5.2" width="16.8" height="16.4" fill="none" stroke="#9cc0e4" stroke-width="0.6"/><path d="M7.8999999999999995 13.3H18.5M13.2 8.0V18.6" stroke="#1f6cb4" stroke-width="1.6" fill="none"/><circle cx="13.2" cy="13.3" r="2.2" fill="#c4446a"/></g><g transform="translate(732.30 333.60)"><path d="M16.4 16.6L22.4 22.6" stroke="#1f6cb4" stroke-width="1.5"/><circle cx="10.9" cy="10.9" r="7" fill="url(#g2)" stroke="#1f6cb4" stroke-width="1.4"/><path d="M6.4 10.9H15.4M10.9 6.4V15.4" stroke="#1f6cb4" stroke-width="1" fill="none"/><circle cx="10.9" cy="10.9" r="2.2" fill="#c4446a"/></g><g transform="translate(760.00 333.60)"><defs><linearGradient id="mt" x1="0" y1="0" x2="0" y2="1"><stop offset="0" stop-color="#2a72b8"/><stop offset="1" stop-color="#fff"/></linearGradient></defs><path d="M13 12.6L21.6 21.4H4.6Z" fill="url(#mt)"/><path d="M4.6 21.4L12 13.6M21.6 21.4L14 13.6" stroke="#1f6cb4" stroke-width="0.9"/><rect x="4.7" y="5.2" width="16.9" height="16.4" fill="none" stroke="#1f6cb4" stroke-width="1.8"/><circle cx="13" cy="9.4" r="2.4" fill="#c4446a"/></g><g transform="translate(566.10 361.05)"><path d="M5.1 22L23.4 4.2" stroke="#1f6cb4" stroke-width="1.5"/><circle cx="8.5" cy="18.6" r="2.5" fill="#c4446a"/><circle cx="19.4" cy="7.4" r="2.5" fill="#c4446a"/></g><g transform="translate(593.80 361.05)"><rect x="5.6" y="7.1" width="16.3" height="12.2" fill="url(#g2)" stroke="#1f6cb4" stroke-width="1.2"/><path d="M5.4 7.1V11.1" stroke="#0f559a" stroke-width="1.2"/><path d="M3.2 10.0H7.6000000000000005L5.4 12.6Z" fill="#0f559a"/><path d="M21.7 7.1V11.1" stroke="#0f559a" stroke-width="1.2"/><path d="M19.5 10.0H23.9L21.7 12.6Z" fill="#0f559a"/><rect x="3.4" y="13" width="20.6" height="1.7" fill="#c4446a"/></g><g transform="translate(621.50 361.05)"><rect x="5.2" y="7.1" width="16.3" height="12.2" fill="url(#g2)" stroke="#1f6cb4" stroke-width="1.2"/><path d="M13.3 7.1V19.3" stroke="#1f6cb4" stroke-width="0.9"/><path d="M5 7.1V11.1" stroke="#0f559a" stroke-width="1.2"/><path d="M2.8 10.0H7.2L5 12.6Z" fill="#0f559a"/><path d="M13.3 7.1V11.1" stroke="#0f559a" stroke-width="1.2"/><path d="M11.100000000000001 10.0H15.5L13.3 12.6Z" fill="#0f559a"/><path d="M21.4 7.1V11.1" stroke="#0f559a" stroke-width="1.2"/><path d="M19.2 10.0H23.599999999999998L21.4 12.6Z" fill="#0f559a"/><rect x="3" y="13" width="20.6" height="1.7" fill="#c4446a"/></g><g transform="translate(649.20 361.05)"><circle cx="13.3" cy="13.8" r="9.5" fill="url(#g2)" stroke="#1f6cb4" stroke-width="1.3"/><circle cx="4.9" cy="9.3" r="2" fill="#c4446a"/><circle cx="21.7" cy="9.3" r="2" fill="#c4446a"/><circle cx="13.3" cy="23.2" r="2" fill="#c4446a"/></g><g transform="translate(676.90 361.05)"><circle cx="13.3" cy="13.3" r="8.2" fill="none" stroke="#d5e5f5" stroke-width="4"/><circle cx="13.3" cy="13.3" r="10.2" fill="none" stroke="#1f6cb4" stroke-width="0.8"/><circle cx="13.3" cy="13.3" r="9.1" fill="none" stroke="#1f6cb4" stroke-width="0.7"/><circle cx="13.3" cy="13.3" r="6.4" fill="none" stroke="#1f6cb4" stroke-width="0.7"/><circle cx="13.3" cy="13.3" r="5.4" fill="none" stroke="#1f6cb4" stroke-width="0.8"/><circle cx="13.3" cy="13.3" r="7.8" fill="none" stroke="#c4446a" stroke-width="1.1"/><path d="M13.3 3.1V7.9M8.4 17.6L5.9 20M18.2 17.6L20.7 20" stroke="#1f6cb4" stroke-width="0.9"/></g><g transform="translate(704.60 361.05)"><circle cx="13.2" cy="13.3" r="8.2" fill="none" stroke="#d5e5f5" stroke-width="4"/><circle cx="13.2" cy="13.3" r="10.2" fill="none" stroke="#1f6cb4" stroke-width="0.8"/><circle cx="13.2" cy="13.3" r="9.1" fill="none" stroke="#1f6cb4" stroke-width="0.7"/><circle cx="13.2" cy="13.3" r="6.4" fill="none" stroke="#1f6cb4" stroke-width="0.7"/><circle cx="13.2" cy="13.3" r="5.4" fill="none" stroke="#1f6cb4" stroke-width="0.8"/><circle cx="13.2" cy="13.3" r="7.8" fill="none" stroke="#c4446a" stroke-width="1.1"/><path d="M13.2 1.8V8.4M13.2 18.2V24.8M1.8 13.3H8.2M18.2 13.3H24.8" stroke="#f0f0f0" stroke-width="2.2"/><path d="M12.1 3V8M14.3 3V8M12.1 18.6V23.6M14.3 18.6V23.6M3 12.2H8M3 14.4H8M18.4 12.2H23.4M18.4 14.4H23.4" stroke="#1f6cb4" stroke-width="0.7"/><circle cx="13.2" cy="13.3" r="7.8" fill="none" stroke="#c4446a" stroke-width="1.1"/></g><g transform="translate(732.30 361.05)"><circle cx="13.1" cy="13.3" r="9.9" fill="url(#g2)" stroke="#1f6cb4" stroke-width="1.5"/><path d="M10.9 11.8L16.9 14L14 14.8L13.2 17.4Z" fill="#c4446a"/></g><g transform="translate(760.00 361.05)"><circle cx="13.2" cy="8.3" r="5.4" fill="url(#g2)" stroke="#1f6cb4" stroke-width="0.9"/><circle cx="7.3" cy="18.6" r="5.4" fill="url(#g2)" stroke="#1f6cb4" stroke-width="0.9"/><circle cx="19.3" cy="18.6" r="5.4" fill="url(#g2)" stroke="#1f6cb4" stroke-width="0.9"/></g><g transform="translate(566.10 388.50)"><path d="M8 4.7H10A8.6 8.6 0 0 1 10 22.4H8" fill="none" stroke="#1f6cb4" stroke-width="1"/><circle cx="13.3" cy="5.7" r="2" fill="#c4446a"/><circle cx="18.6" cy="13.7" r="2" fill="#c4446a"/><circle cx="13.3" cy="21.5" r="2" fill="#c4446a"/></g><g transform="translate(593.80 388.50)"><path d="M10.1 3.2A10.1 10.1 0 0 1 10.1 23.4V20.6A7.2 7.2 0 0 0 10.1 6.2Z" fill="#d5e5f5" stroke="#1f6cb4" stroke-width="0.8"/><path d="M10.1 4.3A9.1 9.1 0 0 1 10.1 22.4M10.1 7.2A6.2 6.2 0 0 1 10.1 19.6" fill="none" stroke="#1f6cb4" stroke-width="0.6"/><path d="M7.8 5.4H10.1A8 8 0 0 1 10.1 21.4H7.8" fill="none" stroke="#c4446a" stroke-width="1"/></g><g transform="translate(621.50 388.50)"><path d="M10.3 3.8A9.5 9.5 0 0 1 19.6 11.9H16.6A6.5 6.5 0 0 0 10.3 6.9Z" fill="#d5e5f5" stroke="#1f6cb4" stroke-width="0.8"/><path d="M10.3 22.9A9.5 9.5 0 0 0 19.6 14.8H16.6A6.5 6.5 0 0 1 10.3 19.8Z" fill="#d5e5f5" stroke="#1f6cb4" stroke-width="0.8"/><path d="M7.6 5.4H10.3A8 8 0 0 1 10.3 21.4H7.6" fill="none" stroke="#c4446a" stroke-width="1"/></g><g transform="translate(649.20 388.50)"><path d="M3.7 13.6Q5.6 10.4 8.8 8.9H17.7Q21 10.4 22.9 13.6Q19 18 13.3 18.7Q7.6 18 3.7 13.6Z" fill="url(#g2)" stroke="#1f6cb4" stroke-width="1"/><circle cx="3.9" cy="13.6" r="2" fill="#c4446a"/><circle cx="8.8" cy="8.9" r="2" fill="#c4446a"/><circle cx="17.7" cy="8.9" r="2" fill="#c4446a"/><circle cx="22.7" cy="13.6" r="2" fill="#c4446a"/><circle cx="13.3" cy="18.7" r="2" fill="#c4446a"/></g><g transform="translate(676.90 388.50)"><ellipse cx="13.3" cy="13.8" rx="9.8" ry="5.3" fill="#e3eef9" stroke="#1f6cb4" stroke-width="0.9"/><ellipse cx="13.3" cy="13.8" rx="7.6" ry="3.9" fill="none" stroke="#1f6cb4" stroke-width="0.7"/><ellipse cx="13.3" cy="13.8" rx="5.4" ry="2.6" fill="none" stroke="#1f6cb4" stroke-width="0.6"/><path d="M4.4 13.8H22.2M13.3 8.9V18.7" stroke="#c4446a" stroke-width="0.9"/></g><g transform="translate(704.60 388.50)"><ellipse cx="13.2" cy="13.8" rx="8.4" ry="5.4" fill="none" stroke="#1f6cb4" stroke-width="3.6" stroke-dasharray="9.9 1.2" stroke-dashoffset="4.95"/><ellipse cx="13.2" cy="13.8" rx="8.4" ry="5.4" fill="none" stroke="#9cc0e4" stroke-width="1.4"/><ellipse cx="13.2" cy="13.8" rx="7.7" ry="4.8" fill="none" stroke="#c4446a" stroke-width="1"/><ellipse cx="13.2" cy="13.8" rx="5.6" ry="3.1" fill="#f6f9fd"/></g><g transform="translate(732.30 388.50)"><rect x="3.9" y="7.9" width="18.7" height="11.4" fill="url(#g1)" stroke="#1f6cb4" stroke-width="1.6"/><circle cx="7.3" cy="7.6" r="2" fill="#c4446a"/><circle cx="19.1" cy="7.6" r="2" fill="#c4446a"/><circle cx="3.6" cy="13.6" r="2" fill="#c4446a"/><circle cx="22.8" cy="13.6" r="2" fill="#c4446a"/><circle cx="13.1" cy="19.6" r="2" fill="#c4446a"/></g><g transform="translate(760.00 388.50)"><rect x="3.8" y="8" width="18.4" height="11.2" fill="url(#g1)" stroke="#1f6cb4" stroke-width="1.8"/><rect x="8.3" y="11.6" width="9.7" height="4.9" fill="#dbe8f6" stroke="#1f6cb4" stroke-width="1"/><path d="M4.4 13.9H7.4M18.8 13.9H21.8" stroke="#c4446a" stroke-width="0.8"/><path d="M5.9 11.9L6.9 13.9L5.9 15.9L4.9 13.9ZM20.4 11.9L21.4 13.9L20.4 15.9L19.4 13.9Z" fill="#c4446a"/></g><g transform="translate(566.10 415.95)"><rect x="4.1" y="8.2" width="19.6" height="11.4" rx="5.7" fill="url(#g1)" stroke="#1f6cb4" stroke-width="1"/><circle cx="9.9" cy="7.9" r="2" fill="#c4446a"/><circle cx="17.3" cy="7.9" r="2" fill="#c4446a"/><circle cx="4.9" cy="13.9" r="2" fill="#c4446a"/><circle cx="22.9" cy="13.9" r="2" fill="#c4446a"/><circle cx="13.5" cy="19.7" r="2" fill="#c4446a"/></g><g transform="translate(593.80 415.95)"><rect x="4.5" y="8.2" width="18.2" height="11" rx="5.5" fill="url(#g1)" stroke="#1f6cb4" stroke-width="1.1"/><rect x="7.7" y="10.7" width="11.4" height="6.1" rx="3" fill="#dbe8f6" stroke="#1f6cb4" stroke-width="0.9"/><path d="M4.8 13.8H7.6M19.4 13.8H22.2" stroke="#c4446a" stroke-width="1.6"/></g><g transform="translate(621.50 415.95)"><circle cx="13.4" cy="14.8" r="9.7" fill="url(#g1)" stroke="#1f6cb4" stroke-width="1.1"/><circle cx="13.4" cy="15.4" r="5.2" fill="#e3eef9" stroke="#1f6cb4" stroke-width="0.9"/><circle cx="13.4" cy="5.3" r="1.9" fill="#c4446a"/><circle cx="13.4" cy="10.3" r="1.9" fill="#c4446a"/><circle cx="9.8" cy="16.8" r="1.9" fill="#c4446a"/><circle cx="17" cy="16.8" r="1.9" fill="#c4446a"/><circle cx="5.6" cy="20.4" r="1.9" fill="#c4446a"/><circle cx="21.4" cy="20.4" r="1.9" fill="#c4446a"/></g><g transform="translate(649.20 415.95)"><circle cx="13.3" cy="13.9" r="9.7" fill="url(#g1)" stroke="#1f6cb4" stroke-width="1.1"/><circle cx="13.3" cy="13.9" r="4.3" fill="#e3eef9" stroke="#1f6cb4" stroke-width="0.9"/><path d="M13.3 5.4V9M13.3 18.8V22.4M4.8 13.9H8.4M18.2 13.9H21.8" stroke="#c4446a" stroke-width="0.9"/><path d="M12.3 5.4H14.3M12.3 22.4H14.3M4.8 12.9V14.9M21.8 12.9V14.9" stroke="#c4446a" stroke-width="0.8"/></g><g transform="translate(676.90 415.95)"><path d="M4.4 20.1C7.5 19 8.2 8.2 10.6 8.1C13.4 8 14.4 18.6 17.8 18.7C20 18.8 21.8 16.4 22.6 14.2" fill="none" stroke="#1f6cb4" stroke-width="1"/><circle cx="5.9" cy="17.6" r="1.9" fill="#c4446a"/><circle cx="10.6" cy="8.6" r="1.9" fill="#c4446a"/><circle cx="17.8" cy="18.5" r="1.9" fill="#c4446a"/></g><g transform="translate(704.60 415.95)"><path d="M7.9 4.3C11 3.8 12.2 6.4 12.4 8.6C12.6 11 16.5 10.6 18.9 12.5C21.4 14.4 21.8 17 20.9 19.2C20 21.6 18.4 23.2 16.5 23C14.2 22.8 13 20.6 10.6 19.4C8.2 18.2 4.4 18.8 4.5 16.3C4.6 14.4 6.4 13.4 6.2 11.3C6 9.4 4.6 5 7.9 4.3Z" fill="none" stroke="#1f6cb4" stroke-width="0.9"/><circle cx="18.9" cy="12.5" r="1.9" fill="#c4446a"/><circle cx="10.6" cy="19.4" r="1.9" fill="#c4446a"/><circle cx="6.2" cy="11.3" r="1.9" fill="#c4446a"/></g><g transform="translate(732.30 415.95)"><path d="M7.1 5.2V23M3.7 5.2H11.4M3.7 23H21" stroke="#1f6cb4" stroke-width="1.5" fill="none"/><circle cx="7.1" cy="5.3" r="1.7" fill="#c4446a"/><circle cx="7.1" cy="22.9" r="1.7" fill="#c4446a"/><text transform="translate(18.2 18.7) scale(1 1.46)" text-anchor="middle" font-family="Liberation Serif, serif" font-size="12.6" fill="#c4446a">H</text></g><g transform="translate(760.00 415.95)"><path d="M3.6 5.4L14.2 15.5" stroke="#0f559a" stroke-width="2.2"/><path d="M14 15.3L15.9 17.4" stroke="#0f559a" stroke-width="0.9"/><path d="M22.3 6.1A16.6 16.6 0 0 1 5.8 22.5" fill="none" stroke="#1f6cb4" stroke-width="1.9"/><path d="M20.3 6.1A14.6 14.6 0 0 1 12 19.6" fill="none" stroke="#8dbae2" stroke-width="0.8"/><circle cx="15.9" cy="17.4" r="1.9" fill="#c4446a"/></g><g transform="translate(566.10 443.40)"><circle cx="13.5" cy="14" r="9.8" fill="url(#g2)" stroke="#1f6cb4" stroke-width="1.3"/><path d="M9.9 14H17.1M13.5 10.4V17.6" stroke="#1f6cb4" stroke-width="0.9" fill="none"/><circle cx="13.5" cy="14" r="1.5" fill="#c4446a"/></g><g transform="translate(593.80 443.40)"><path d="M4.2 19.2H14.2M10.4 15.2L14.6 19.2L10.4 23.2M18.6 14.6V4.8M14.6 8.6L18.6 4.4L22.6 8.6" fill="none" stroke="#0f559a" stroke-width="1.6"/><circle cx="18.6" cy="19.2" r="2.4" fill="#c4446a"/></g><g transform="translate(621.50 443.40)"><rect x="9.4" y="5" width="9" height="10.5" fill="url(#g1)" stroke="#1f6cb4" stroke-width="0.9"/><ellipse cx="13.7" cy="19.4" rx="9.8" ry="3.9" fill="url(#g1)" stroke="#1f6cb4" stroke-width="0.9"/></g><g transform="translate(649.20 443.40)"><rect x="6.4" y="4" width="14.4" height="20" fill="#2a72b8"/><rect x="8.6" y="6" width="10.1" height="4.8" fill="#b7d1ec"/><rect x="9.8" y="7.3" width="7.7" height="2.1" fill="#c4446a"/><rect x="9.1" y="13.3" width="2.3" height="2" fill="#fff"/><rect x="9.1" y="16.3" width="2.3" height="2" fill="#fff"/><rect x="9.1" y="19.3" width="2.3" height="2" fill="#fff"/><rect x="12.4" y="13.3" width="2.3" height="2" fill="#fff"/><rect x="12.4" y="16.3" width="2.3" height="2" fill="#fff"/><rect x="12.4" y="19.3" width="2.3" height="2" fill="#fff"/><rect x="15.7" y="13.3" width="2.3" height="2" fill="#fff"/><rect x="15.7" y="16.3" width="2.3" height="2" fill="#fff"/><rect x="15.7" y="19.3" width="2.3" height="2" fill="#fff"/></g><g transform="translate(676.90 443.40)"><path d="M13.6 6.2L15.4 9.6C19.6 10 22 12.6 21.8 15.8C21.6 19 18.6 21.4 14.8 22.9C16 21.4 16.2 20.2 15.4 19.2L13.8 21L6.2 15.6H12V12H6.2V11.6L12.6 10Z" fill="#a9a9a9"/><path d="M6.4 12.4H13V17.6H6.4Z" fill="#a9a9a9"/><path d="M8 15H11M13 14.9H16.4M15 13.4L16.8 14.9L15 16.4" stroke="#f0f0f0" stroke-width="0.9" fill="none"/></g><g transform="translate(0.00 0.00)"><circle cx="578.2" cy="489.3" r="2.6" fill="#0f559a"/></g><g transform="translate(0.00 0.00)"><path d="M597.8 497.8L615.4 480.5" stroke="#1f6cb4" stroke-width="2.2" stroke-linecap="round"/></g><g transform="translate(0.00 0.00)"><circle cx="633.6" cy="489.3" r="10.3" fill="url(#g2)" stroke="#1f6cb4" stroke-width="1.2"/></g><g transform="translate(0.00 0.00)"><path d="M652.3 482.6A9.6 9.6 0 1 1 661.9 498.7" fill="none" stroke="#1f6cb4" stroke-width="1.3"/></g><g transform="translate(0.00 0.00)"><ellipse cx="688.9" cy="489.3" rx="9.7" ry="5.2" fill="url(#g2)" stroke="#1f6cb4" stroke-width="1"/></g><g transform="translate(0.00 0.00)"><rect x="707.2" y="483.6" width="18.7" height="11.6" fill="url(#g1)" stroke="#1f6cb4" stroke-width="1.6"/></g><g transform="translate(0.00 0.00)"><rect x="734.6" y="483.4" width="19" height="12" rx="6" fill="url(#g1)" stroke="#1f6cb4" stroke-width="0.9"/></g><g transform="translate(0.00 0.00)"><circle cx="771.7" cy="489.3" r="7.2" fill="none" stroke="#5d9ad2" stroke-width="5.3"/><circle cx="771.7" cy="489.3" r="9.6" fill="none" stroke="#1f6cb4" stroke-width="1"/><circle cx="771.7" cy="489.3" r="7.2" fill="none" stroke="#8dbae2" stroke-width="2"/></g><g transform="translate(0.00 0.00)"><path d="M569.5 517.5V525M587 517.5V525M569.5 521.2H587" stroke="#1f6cb4" stroke-width="1.5" fill="none"/><path d="M570.2 521.2L573.4 519.4V523ZM586.3 521.2L583.1 519.4V523Z" fill="#1f6cb4"/><text transform="translate(579 518.8) scale(1 1.42)" text-anchor="middle" font-family="Liberation Serif, serif" font-weight="normal" font-size="10.4" fill="#c4446a">D</text></g><g transform="translate(0.00 0.00)"><defs><linearGradient id="ag" x1="0" y1="1" x2="1" y2="0"><stop offset="0" stop-color="#5d9ad2"/><stop offset="1" stop-color="#fff"/></linearGradient></defs><path d="M595.2 527.1L601.4 514.4Q606.4 516.6 606.8 521.8Z" fill="url(#ag)"/><path d="M604.5 507.9L595.2 527.1L614.9 518.3" fill="none" stroke="#1f6cb4" stroke-width="0.9"/><path d="M600.8 515.6Q606.6 515.4 606.8 521.8" fill="none" stroke="#c4446a" stroke-width="1"/><text transform="translate(611.5 516.6) scale(1 1.42)" text-anchor="middle" font-family="Liberation Serif, serif" font-weight="normal" font-size="10" fill="#c4446a">A</text></g><g transform="translate(0.00 0.00)"><path d="M629.1 507.7V525.8M625.2 507.7H632.6M625.2 525.8H641.8" stroke="#1f6cb4" stroke-width="1.8" fill="none"/><path d="M629.1 508.4L631 511.6H627.2ZM629.1 525.2L631 522H627.2Z" fill="#0f559a"/><text transform="translate(637 521.7) scale(1 1.4)" text-anchor="middle" font-family="Liberation Serif, serif" font-weight="normal" font-size="10.4" fill="#c4446a">H</text></g><g transform="translate(0.00 0.00)"><path d="M651.9 524.1C655.4 522.6 655.2 511.2 658.3 511.1C661.6 511 662.4 521 667 521.2C668.8 521.2 670 519.4 670.4 517.5" fill="none" stroke="#1f6cb4" stroke-width="1.3"/></g><g transform="translate(0.00 0.00)"><path d="M684.1 507.2C687.2 506.8 688.6 509.6 688.4 512.2C688.2 514.8 695.6 515 697.1 518.8C698.2 521.8 696.2 526.4 692.3 526.5C688.6 526.6 688.4 522.4 685.2 521.6C682.6 521 680.4 520.6 680.6 518C680.8 515.6 682.8 514.8 682 512.6C681 510 680.6 507.8 684.1 507.2Z" fill="none" stroke="#1f6cb4" stroke-width="1"/></g><g transform="translate(0.00 0.00)"><path d="M706.2 522.6L718.7 516.3L727.6 520.7L715.3 526.9Z" fill="#0f559a"/><path d="M706.2 517.1L718.7 510.8L727.6 515.2L715.3 521.4Z" fill="#f0f0f0" stroke="#f0f0f0" stroke-width="2.2" stroke-linejoin="round"/><path d="M706.2 517.1L718.7 510.8L727.6 515.2L715.3 521.4Z" fill="url(#g1)" stroke="#4a8cc8" stroke-width="0.6"/></g><g transform="translate(0.00 0.00)"><circle cx="743.9" cy="516.9" r="9.7" fill="#d5e5f5" stroke="#1f6cb4" stroke-width="1.1"/><ellipse cx="743.9" cy="516.9" rx="4.6" ry="9.7" fill="none" stroke="#1f6cb4" stroke-width="0.9"/><path d="M743.9 507.2V526.6M734.2 516.9H753.6M735.6 512H752.2M735.6 521.8H752.2" stroke="#1f6cb4" stroke-width="0.9" fill="none"/><ellipse cx="743.9" cy="516.9" rx="8" ry="9.7" fill="none" stroke="#1f6cb4" stroke-width="0.6"/></g><g transform="translate(0.00 0.00)"><path d="M764.8 510.1V525A6.85 2.9 0 0 0 778.5 525V510.1Z" fill="url(#g1)" stroke="#5d9ad2" stroke-width="0.8"/><ellipse cx="771.65" cy="510.1" rx="6.85" ry="2.9" fill="#e3eef9" stroke="#5d9ad2" stroke-width="0.8"/></g><g transform="translate(0.00 0.00)"><rect x="571.6" y="535" width="13.6" height="19.2" fill="#fff" stroke="#2a72b8" stroke-width="1.5"/><rect x="572.4" y="535.8" width="12" height="6.2" fill="#b7d1ec"/><path d="M571.6 542.4H585.2" stroke="#2a72b8" stroke-width="1"/><rect x="574.5" y="537.8" width="7.7" height="2" fill="#c4446a"/><path d="M573.6 546.3H577M575.3 544.6V548M579.6 546.3H583M574 549L576.6 551.6M576.6 549L574 551.6M579.6 549.6H583M579.6 551.2H583" stroke="#0f559a" stroke-width="0.9" fill="none"/></g><g transform="translate(0.00 0.00)"><path d="M574.5 566.4V580H588.7M574.5 580L568.4 586.6" fill="none" stroke="#1f6cb4" stroke-width="1.5" stroke-linejoin="round"/><text transform="translate(582.6 577.8) scale(1 1.0)" text-anchor="middle" font-family="Liberation Serif, serif" font-weight="normal" font-size="16" fill="#c4446a">O</text></g><g transform="translate(0.00 0.00)"><path d="M602.1 566.4V580H616.3M602.1 580L595.7 586.6" fill="none" stroke="#1f6cb4" stroke-width="1.5" stroke-linejoin="round"/><text transform="translate(609 577.8) scale(1 1.0)" text-anchor="middle" font-family="Liberation Serif, serif" font-weight="bold" font-size="16.4" fill="#c4446a">S</text></g><g transform="translate(0.00 0.00)"><defs><linearGradient id="xg" x1="0" y1="0" x2="1" y2="1"><stop offset="0" stop-color="#a8dca8"/><stop offset="0.6" stop-color="#e8f6e8"/><stop offset="1" stop-color="#58b060"/></linearGradient></defs><path d="M631 565H648.9V588H627V569Z" fill="url(#xg)" stroke="#3a9a4a" stroke-width="0.8"/><text x="635.6" y="582.6" text-anchor="middle" font-family="Liberation Sans, sans-serif" font-weight="bold" font-size="17.5" fill="#2a8a3a" transform="rotate(-6 635.6 577)">X</text><path d="M640.6 577.6L648.4 579.8V586.8L640.6 584.6Z" fill="#fff" stroke="#58b060" stroke-width="0.7"/><path d="M641.6 580.2L647.6 581.8M641.6 582.4L647.6 584" stroke="#58b060" stroke-width="0.8"/></g><g transform="translate(0.00 0.00)"><defs><linearGradient id="wg" x1="0" y1="0" x2="1" y2="0"><stop offset="0" stop-color="#3a68c8"/><stop offset="1" stop-color="#a8c0ec"/></linearGradient></defs><path d="M655 569Q656 565.4 660 565.4H674V584.6H655Z" fill="url(#wg)"/><path d="M659.6 568.6H676.7V587.8H659.6Z" fill="#eef2fa" stroke="#c8d0e0" stroke-width="0.6"/><text x="664.6" y="576.4" text-anchor="middle" font-family="Liberation Serif, serif" font-weight="bold" font-style="italic" font-size="8.6" fill="#2a58b8">W</text><path d="M670 571.4H675M670 573.6H675M661.4 578.8H675M661.4 581H675M661.4 583.2H675" stroke="#3a68c8" stroke-width="0.9"/><path d="M655 584.6L659.6 587.8V584.6Z" fill="#8898b8"/></g><g transform="translate(0.00 0.00)"><rect x="688.9" y="567.9" width="17.2" height="17.1" fill="none" stroke="#3a80c2" stroke-width="1.8"/><path d="M694.1 576.5H700.9M697.5 573.1V579.9" stroke="#c4446a" stroke-width="0.8"/></g><g transform="translate(0.00 0.00)"><path d="M716.4 574V567.9H722.4M728.4 567.9H734.2V574M734.2 579V585H728.4M722.4 585H716.4V579" fill="none" stroke="#3a80c2" stroke-width="1.8"/><path d="M721.7 576.5H728.5M725.1 573.1V579.9" stroke="#c4446a" stroke-width="0.8"/></g><g transform="translate(0.00 0.00)"><rect x="571.5" y="596.3" width="15" height="15.3" fill="url(#g1)" stroke="#1f6cb4" stroke-width="1.5"/><rect x="574.8" y="596.4" width="8.3" height="6.3" fill="#e3eef9"/><rect x="575.9" y="598.1" width="5.8" height="3.3" fill="#c4446a"/></g><g transform="translate(0.00 0.00)"><path d="M602.1 594V607.8H616.3M602.1 607.8L595.7 614.3" fill="none" stroke="#1f6cb4" stroke-width="1.5" stroke-linejoin="round"/><path d="M611.6 597.6C607.6 596.6 605.6 598.6 605.6 600.6C605.6 603 608 604.6 612.6 603.6" fill="none" stroke="#c4446a" stroke-width="1.6"/><path d="M614.4 597.2L610.8 594.6V599.6Z" fill="#c4446a"/></g><g transform="translate(0.00 0.00)"><defs><linearGradient id="acg" x1="0" y1="0" x2="1" y2="0"><stop offset="0" stop-color="#fff"/><stop offset="0.5" stop-color="#888"/><stop offset="1" stop-color="#444"/></linearGradient></defs><rect x="627" y="594" width="21.4" height="20.5" fill="#2fb48c"/><path d="M643 594V614.5M627 608H648.4" stroke="#6fd0b0" stroke-width="0.6"/><path d="M627.4 614.5L634.4 594.6H638L645.4 614.5H641L639.4 609.6H632.4L630.8 614.5Z" fill="url(#acg)"/><path d="M633.4 606.6H638.4L635.9 598.6Z" fill="#2fb48c"/><text x="643.6" y="603.4" text-anchor="middle" font-family="Liberation Sans, sans-serif" font-weight="bold" font-size="5.6" fill="#fff" textLength="9.6" lengthAdjust="spacingAndGlyphs">CAD</text></g><g transform="translate(0.00 0.00)"><defs><linearGradient id="npg" x1="0" y1="1" x2="1" y2="0"><stop offset="0" stop-color="#1a98e0"/><stop offset="0.55" stop-color="#8ed0f4"/><stop offset="1" stop-color="#fff"/></linearGradient></defs><path d="M664.4 597L676.4 598.6L674.6 614.8L662 613Z" fill="#e8e0c8" stroke="#b0a888" stroke-width="0.6"/><path d="M661.6 594.2L674.6 595.8L670.6 613.6L654.4 610.4Z" fill="url(#npg)" stroke="#b8c8d8" stroke-width="0.6"/><path d="M661.6 594.2L674.6 595.8" stroke="#888" stroke-width="1.2"/></g><g transform="translate(0.00 0.00)"><path d="M688.6 601V595.9H694.6M700.6 595.9H706.4V601M706.4 607.6V612.8H700.6M694.6 612.8H688.6V607.6" fill="none" stroke="#3a80c2" stroke-width="1.8"/><text transform="translate(697.7 609.2) scale(1 1.22)" text-anchor="middle" font-family="Liberation Serif, serif" font-weight="bold" font-size="11.4" fill="#c4446a" textLength="14.8" lengthAdjust="spacingAndGlyphs">MF</text></g><g transform="translate(0.00 0.00)"><rect x="716.3" y="598.4" width="17.8" height="12" fill="#000" stroke="#2a72b8" stroke-width="1.1"/><rect x="722" y="599" width="6" height="10.8" fill="#14f070"/><rect x="728" y="599" width="5.5" height="10.8" fill="#c05870"/></g><g transform="translate(803.70 333.50)"><g transform="translate(1.6 1)"><path d="M3.4 2.6L16.6 10.9L3.4 19.2Z" fill="url(#g3)" stroke="#12964a" stroke-width="1.3" stroke-linejoin="round"/></g></g><g transform="translate(828.35 333.50)"><g transform="translate(1.6 1)"><rect x="4" y="2.2" width="5.4" height="17.3" fill="#a0a0a0"/><rect x="10.9" y="2.2" width="5.2" height="17.3" fill="#a0a0a0"/></g></g><g transform="translate(853.00 333.50)"><g transform="translate(1.6 1)"><path d="M1.3 3.5L11 10.8L1.3 18.1ZM9.2 3.5L19.2 10.8L9.2 18.1Z" fill="#a0a0a0"/></g></g><g transform="translate(877.65 333.50)"><g transform="translate(1.6 1)"><rect x="3.2" y="3.5" width="15.4" height="14.4" fill="#a0a0a0"/></g></g><g transform="translate(902.30 333.50)"><g transform="translate(1.6 1)"><path d="M17.68 9.73 L17.68 12.47 L15.42 12.48 L14.87 13.81 L16.45 15.42 L14.52 17.35 L12.91 15.77 L11.58 16.32 L11.57 18.58 L8.83 18.58 L8.82 16.32 L7.49 15.77 L5.88 17.35 L3.95 15.42 L5.53 13.81 L4.98 12.48 L2.72 12.47 L2.72 9.73 L4.98 9.72 L5.53 8.39 L3.95 6.78 L5.88 4.85 L7.49 6.43 L8.82 5.88 L8.83 3.62 L11.57 3.62 L11.58 5.88 L12.91 6.43 L14.52 4.85 L16.45 6.78 L14.87 8.39 L15.42 9.72Z" fill="#1f6cb4"/><circle cx="10.2" cy="11.1" r="2.6" fill="#c4446a"/></g></g></svg>
<div class="a" style="left:1164.5px;top:1.6px;width:1.5px;height:640px;background:#fff"></div>
<div class="a" style="left:1163px;top:44px;width:1px;height:578px;background:#fafafa"></div>
</body></html>
